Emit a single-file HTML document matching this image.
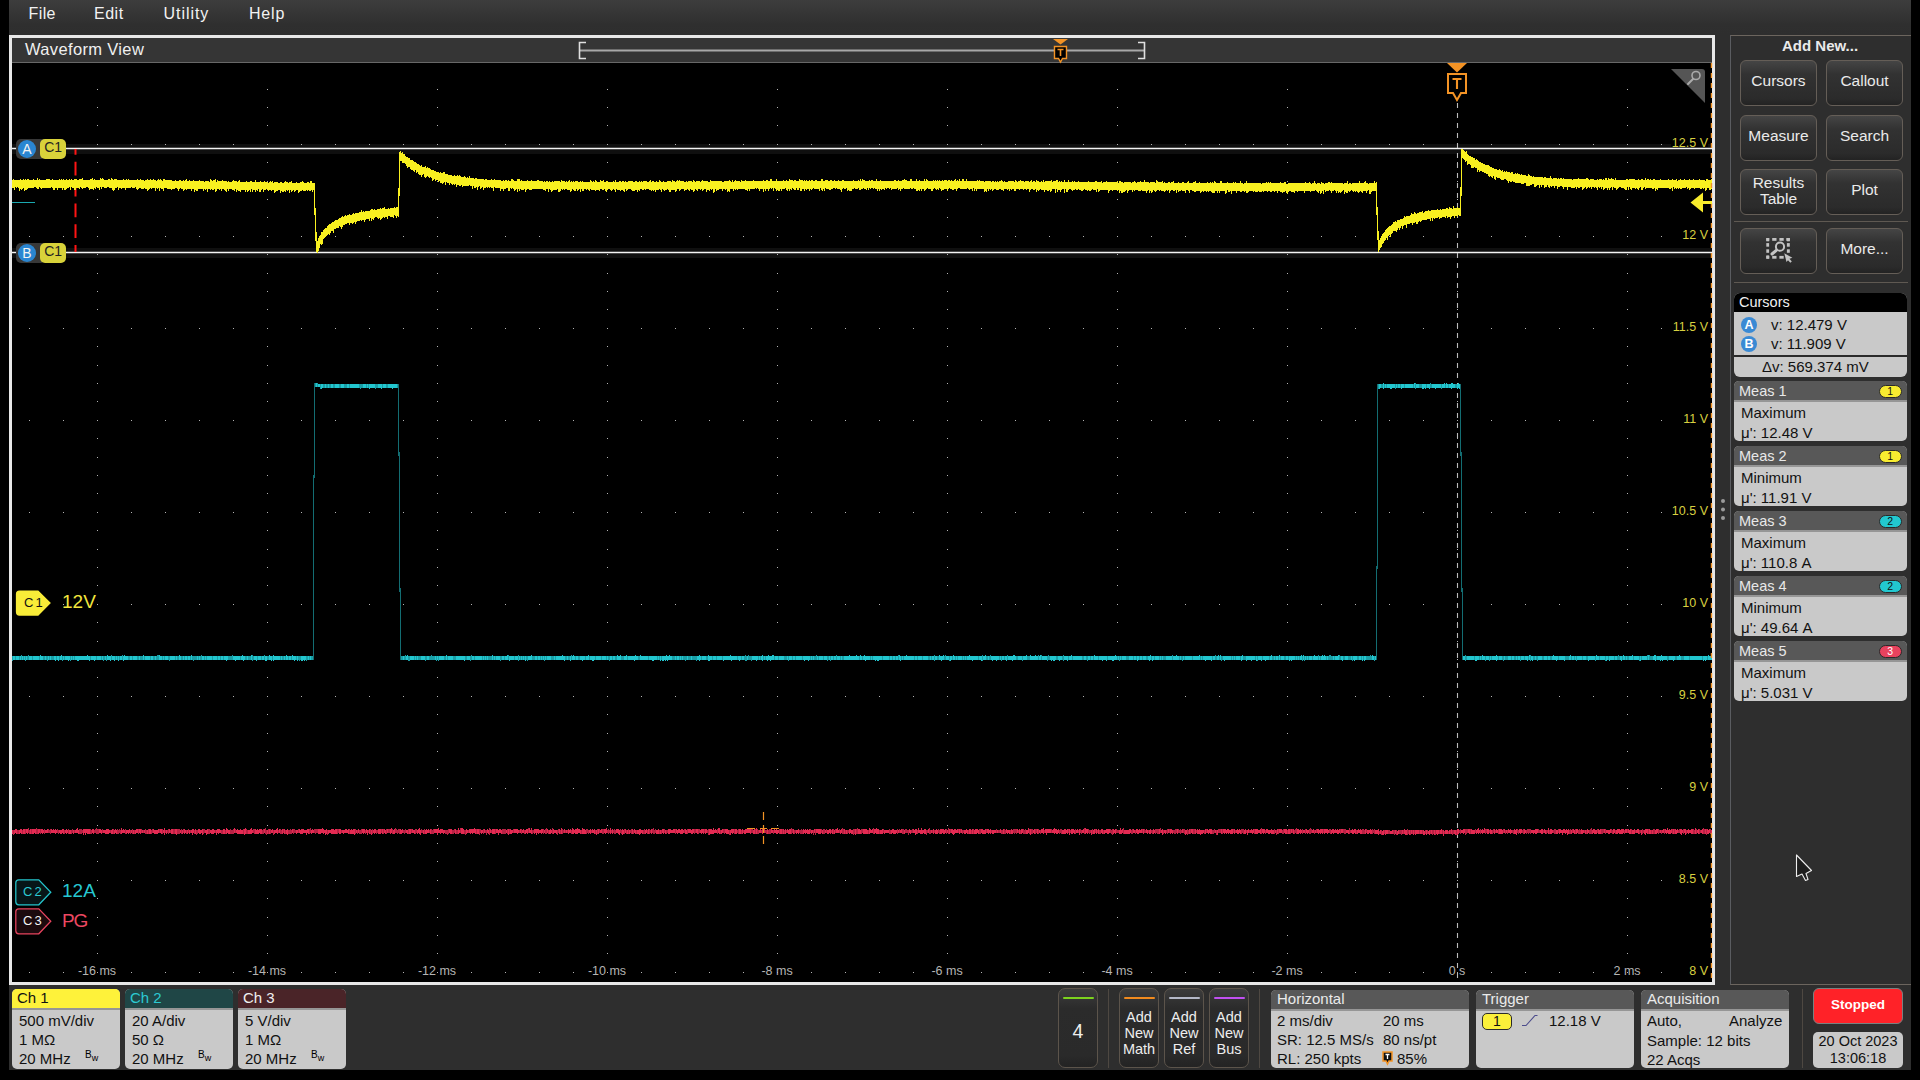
<!DOCTYPE html>
<html><head><meta charset="utf-8">
<style>
*{margin:0;padding:0;box-sizing:border-box}
html,body{width:1920px;height:1080px;overflow:hidden;background:#000}
body{position:relative;font-family:"Liberation Sans",sans-serif;color:#eee}
.a{position:absolute}
.t{position:absolute;white-space:nowrap;line-height:1}
#menu{left:9px;top:0;width:1902px;height:35px;background:linear-gradient(#3d3d3d,#2f2f2f 70%,#2e2e2e)}
#menu .t{font-size:16px;color:#f2f2f2;top:6px}
#frame{left:9px;top:35px;width:1706px;height:950px;border:3px solid #e8e8e8;background:#000}
#title{left:12px;top:38px;width:1700px;height:25px;background:#353535;border-bottom:1px solid #686868}
#rp{left:1715px;top:35px;width:196px;height:950px;background:#2e2e2e}
#rpo{left:1730px;top:35px;width:181px;height:950px;border:1px solid #6c655e;border-left-color:#5a5c60;border-right:none}
.btn{position:absolute;width:77px;height:46px;border:1px solid #655e57;border-radius:6px;background:linear-gradient(#454545,#323232 30%,#2b2b2b 85%,#232323);color:#eaeaea;font-size:15.5px;text-align:center;line-height:1}
.sep{position:absolute;left:1734px;width:174px;height:1px;background:#5f5952}
.card{position:absolute;border-radius:5px;overflow:hidden;background:#c9c9c9}
.card .h{position:absolute;left:0;top:0;right:0;background:#585858;border-bottom:2px solid #969696}
.vl{position:absolute;font-size:12.5px;color:#d8d040;line-height:1;white-space:nowrap;text-align:right;width:60px}
.tl{position:absolute;font-size:12.5px;color:#b4b4b4;line-height:1;white-space:nowrap;text-align:center;width:80px}
#bb{left:9px;top:985px;width:1902px;height:85px;background:#2e2e2e}
.ch .h{height:20px}
.bt{font-size:15px;color:#111;line-height:1}
.nb{position:absolute;width:40px;height:80px;border:1px solid #5c544b;border-radius:7px;background:linear-gradient(#3c3c3c,#2b2b2b 25%,#2a2a2a 85%,#232323);color:#eee;text-align:center}
.nb i{position:absolute;left:3.5px;right:3.5px;top:7.5px;height:2.5px;border-radius:1.5px}
.vsep{position:absolute;top:989px;width:1px;height:79px;background:#4e4842}
</style></head><body>
<div id="menu" class="a">
<span class="t" style="left:19.5px;letter-spacing:0.4px">File</span>
<span class="t" style="left:85px;letter-spacing:0.5px">Edit</span>
<span class="t" style="left:154.5px;letter-spacing:0.95px">Utility</span>
<span class="t" style="left:240px;letter-spacing:0.8px">Help</span>
</div>
<div id="rp" class="a"></div>
<div id="rpo" class="a"></div>
<div id="frame" class="a"></div>
<div id="title" class="a"><span class="t" style="left:13px;top:3px;font-size:16.5px;color:#f0f0f0;letter-spacing:0.35px">Waveform View</span></div>
<svg class="a" style="left:0;top:0" width="1920" height="1080" viewBox="0 0 1920 1080"><path d="M579 50.5H1145" stroke="#a8a8a8" stroke-width="2"/><path d="M586 42.5H579.5V58.5H586" fill="none" stroke="#e0e0e0" stroke-width="1.6"/><path d="M1138 42.5H1144.5V58.5H1138" fill="none" stroke="#e0e0e0" stroke-width="1.6"/><path d="M1053 39H1068L1060.5 44.5Z" fill="#f39325"/><path d="M1054.5 46.5H1066.5V58.5H1062.5L1060.5 62L1058.5 58.5H1054.5Z" fill="#000" stroke="#f39325" stroke-width="1.4"/><path d="M1057.5 49.5H1063.5M1060.5 49.5V56" stroke="#f39325" stroke-width="1.6"/><rect x="12" y="144" width="1700" height="10" fill="#0f0f0f"/><rect x="12" y="248" width="1700" height="10" fill="#0f0f0f"/><path fill="#b4b4b4" d="M29 144h1v1h-1zM63 144h1v1h-1zM97 144h1v1h-1zM131 144h1v1h-1zM165 144h1v1h-1zM199 144h1v1h-1zM233 144h1v1h-1zM267 144h1v1h-1zM301 144h1v1h-1zM335 144h1v1h-1zM369 144h1v1h-1zM403 144h1v1h-1zM437 144h1v1h-1zM471 144h1v1h-1zM505 144h1v1h-1zM539 144h1v1h-1zM573 144h1v1h-1zM607 144h1v1h-1zM641 144h1v1h-1zM675 144h1v1h-1zM709 144h1v1h-1zM743 144h1v1h-1zM777 144h1v1h-1zM811 144h1v1h-1zM845 144h1v1h-1zM879 144h1v1h-1zM913 144h1v1h-1zM947 144h1v1h-1zM981 144h1v1h-1zM1015 144h1v1h-1zM1049 144h1v1h-1zM1083 144h1v1h-1zM1117 144h1v1h-1zM1151 144h1v1h-1zM1185 144h1v1h-1zM1219 144h1v1h-1zM1253 144h1v1h-1zM1287 144h1v1h-1zM1321 144h1v1h-1zM1355 144h1v1h-1zM1389 144h1v1h-1zM1423 144h1v1h-1zM1457 144h1v1h-1zM1491 144h1v1h-1zM1525 144h1v1h-1zM1559 144h1v1h-1zM1593 144h1v1h-1zM1627 144h1v1h-1zM1661 144h1v1h-1zM1695 144h1v1h-1zM29 236h1v1h-1zM63 236h1v1h-1zM97 236h1v1h-1zM131 236h1v1h-1zM165 236h1v1h-1zM199 236h1v1h-1zM233 236h1v1h-1zM267 236h1v1h-1zM301 236h1v1h-1zM335 236h1v1h-1zM369 236h1v1h-1zM403 236h1v1h-1zM437 236h1v1h-1zM471 236h1v1h-1zM505 236h1v1h-1zM539 236h1v1h-1zM573 236h1v1h-1zM607 236h1v1h-1zM641 236h1v1h-1zM675 236h1v1h-1zM709 236h1v1h-1zM743 236h1v1h-1zM777 236h1v1h-1zM811 236h1v1h-1zM845 236h1v1h-1zM879 236h1v1h-1zM913 236h1v1h-1zM947 236h1v1h-1zM981 236h1v1h-1zM1015 236h1v1h-1zM1049 236h1v1h-1zM1083 236h1v1h-1zM1117 236h1v1h-1zM1151 236h1v1h-1zM1185 236h1v1h-1zM1219 236h1v1h-1zM1253 236h1v1h-1zM1287 236h1v1h-1zM1321 236h1v1h-1zM1355 236h1v1h-1zM1389 236h1v1h-1zM1423 236h1v1h-1zM1457 236h1v1h-1zM1491 236h1v1h-1zM1525 236h1v1h-1zM1559 236h1v1h-1zM1593 236h1v1h-1zM1627 236h1v1h-1zM1661 236h1v1h-1zM1695 236h1v1h-1zM29 328h1v1h-1zM63 328h1v1h-1zM97 328h1v1h-1zM131 328h1v1h-1zM165 328h1v1h-1zM199 328h1v1h-1zM233 328h1v1h-1zM267 328h1v1h-1zM301 328h1v1h-1zM335 328h1v1h-1zM369 328h1v1h-1zM403 328h1v1h-1zM437 328h1v1h-1zM471 328h1v1h-1zM505 328h1v1h-1zM539 328h1v1h-1zM573 328h1v1h-1zM607 328h1v1h-1zM641 328h1v1h-1zM675 328h1v1h-1zM709 328h1v1h-1zM743 328h1v1h-1zM777 328h1v1h-1zM811 328h1v1h-1zM845 328h1v1h-1zM879 328h1v1h-1zM913 328h1v1h-1zM947 328h1v1h-1zM981 328h1v1h-1zM1015 328h1v1h-1zM1049 328h1v1h-1zM1083 328h1v1h-1zM1117 328h1v1h-1zM1151 328h1v1h-1zM1185 328h1v1h-1zM1219 328h1v1h-1zM1253 328h1v1h-1zM1287 328h1v1h-1zM1321 328h1v1h-1zM1355 328h1v1h-1zM1389 328h1v1h-1zM1423 328h1v1h-1zM1457 328h1v1h-1zM1491 328h1v1h-1zM1525 328h1v1h-1zM1559 328h1v1h-1zM1593 328h1v1h-1zM1627 328h1v1h-1zM1661 328h1v1h-1zM1695 328h1v1h-1zM29 420h1v1h-1zM63 420h1v1h-1zM97 420h1v1h-1zM131 420h1v1h-1zM165 420h1v1h-1zM199 420h1v1h-1zM233 420h1v1h-1zM267 420h1v1h-1zM301 420h1v1h-1zM335 420h1v1h-1zM369 420h1v1h-1zM403 420h1v1h-1zM437 420h1v1h-1zM471 420h1v1h-1zM505 420h1v1h-1zM539 420h1v1h-1zM573 420h1v1h-1zM607 420h1v1h-1zM641 420h1v1h-1zM675 420h1v1h-1zM709 420h1v1h-1zM743 420h1v1h-1zM777 420h1v1h-1zM811 420h1v1h-1zM845 420h1v1h-1zM879 420h1v1h-1zM913 420h1v1h-1zM947 420h1v1h-1zM981 420h1v1h-1zM1015 420h1v1h-1zM1049 420h1v1h-1zM1083 420h1v1h-1zM1117 420h1v1h-1zM1151 420h1v1h-1zM1185 420h1v1h-1zM1219 420h1v1h-1zM1253 420h1v1h-1zM1287 420h1v1h-1zM1321 420h1v1h-1zM1355 420h1v1h-1zM1389 420h1v1h-1zM1423 420h1v1h-1zM1457 420h1v1h-1zM1491 420h1v1h-1zM1525 420h1v1h-1zM1559 420h1v1h-1zM1593 420h1v1h-1zM1627 420h1v1h-1zM1661 420h1v1h-1zM1695 420h1v1h-1zM29 512h1v1h-1zM63 512h1v1h-1zM97 512h1v1h-1zM131 512h1v1h-1zM165 512h1v1h-1zM199 512h1v1h-1zM233 512h1v1h-1zM267 512h1v1h-1zM301 512h1v1h-1zM335 512h1v1h-1zM369 512h1v1h-1zM403 512h1v1h-1zM437 512h1v1h-1zM471 512h1v1h-1zM505 512h1v1h-1zM539 512h1v1h-1zM573 512h1v1h-1zM607 512h1v1h-1zM641 512h1v1h-1zM675 512h1v1h-1zM709 512h1v1h-1zM743 512h1v1h-1zM777 512h1v1h-1zM811 512h1v1h-1zM845 512h1v1h-1zM879 512h1v1h-1zM913 512h1v1h-1zM947 512h1v1h-1zM981 512h1v1h-1zM1015 512h1v1h-1zM1049 512h1v1h-1zM1083 512h1v1h-1zM1117 512h1v1h-1zM1151 512h1v1h-1zM1185 512h1v1h-1zM1219 512h1v1h-1zM1253 512h1v1h-1zM1287 512h1v1h-1zM1321 512h1v1h-1zM1355 512h1v1h-1zM1389 512h1v1h-1zM1423 512h1v1h-1zM1457 512h1v1h-1zM1491 512h1v1h-1zM1525 512h1v1h-1zM1559 512h1v1h-1zM1593 512h1v1h-1zM1627 512h1v1h-1zM1661 512h1v1h-1zM1695 512h1v1h-1zM29 604h1v1h-1zM63 604h1v1h-1zM97 604h1v1h-1zM131 604h1v1h-1zM165 604h1v1h-1zM199 604h1v1h-1zM233 604h1v1h-1zM267 604h1v1h-1zM301 604h1v1h-1zM335 604h1v1h-1zM369 604h1v1h-1zM403 604h1v1h-1zM437 604h1v1h-1zM471 604h1v1h-1zM505 604h1v1h-1zM539 604h1v1h-1zM573 604h1v1h-1zM607 604h1v1h-1zM641 604h1v1h-1zM675 604h1v1h-1zM709 604h1v1h-1zM743 604h1v1h-1zM777 604h1v1h-1zM811 604h1v1h-1zM845 604h1v1h-1zM879 604h1v1h-1zM913 604h1v1h-1zM947 604h1v1h-1zM981 604h1v1h-1zM1015 604h1v1h-1zM1049 604h1v1h-1zM1083 604h1v1h-1zM1117 604h1v1h-1zM1151 604h1v1h-1zM1185 604h1v1h-1zM1219 604h1v1h-1zM1253 604h1v1h-1zM1287 604h1v1h-1zM1321 604h1v1h-1zM1355 604h1v1h-1zM1389 604h1v1h-1zM1423 604h1v1h-1zM1457 604h1v1h-1zM1491 604h1v1h-1zM1525 604h1v1h-1zM1559 604h1v1h-1zM1593 604h1v1h-1zM1627 604h1v1h-1zM1661 604h1v1h-1zM1695 604h1v1h-1zM29 696h1v1h-1zM63 696h1v1h-1zM97 696h1v1h-1zM131 696h1v1h-1zM165 696h1v1h-1zM199 696h1v1h-1zM233 696h1v1h-1zM267 696h1v1h-1zM301 696h1v1h-1zM335 696h1v1h-1zM369 696h1v1h-1zM403 696h1v1h-1zM437 696h1v1h-1zM471 696h1v1h-1zM505 696h1v1h-1zM539 696h1v1h-1zM573 696h1v1h-1zM607 696h1v1h-1zM641 696h1v1h-1zM675 696h1v1h-1zM709 696h1v1h-1zM743 696h1v1h-1zM777 696h1v1h-1zM811 696h1v1h-1zM845 696h1v1h-1zM879 696h1v1h-1zM913 696h1v1h-1zM947 696h1v1h-1zM981 696h1v1h-1zM1015 696h1v1h-1zM1049 696h1v1h-1zM1083 696h1v1h-1zM1117 696h1v1h-1zM1151 696h1v1h-1zM1185 696h1v1h-1zM1219 696h1v1h-1zM1253 696h1v1h-1zM1287 696h1v1h-1zM1321 696h1v1h-1zM1355 696h1v1h-1zM1389 696h1v1h-1zM1423 696h1v1h-1zM1457 696h1v1h-1zM1491 696h1v1h-1zM1525 696h1v1h-1zM1559 696h1v1h-1zM1593 696h1v1h-1zM1627 696h1v1h-1zM1661 696h1v1h-1zM1695 696h1v1h-1zM29 788h1v1h-1zM63 788h1v1h-1zM97 788h1v1h-1zM131 788h1v1h-1zM165 788h1v1h-1zM199 788h1v1h-1zM233 788h1v1h-1zM267 788h1v1h-1zM301 788h1v1h-1zM335 788h1v1h-1zM369 788h1v1h-1zM403 788h1v1h-1zM437 788h1v1h-1zM471 788h1v1h-1zM505 788h1v1h-1zM539 788h1v1h-1zM573 788h1v1h-1zM607 788h1v1h-1zM641 788h1v1h-1zM675 788h1v1h-1zM709 788h1v1h-1zM743 788h1v1h-1zM777 788h1v1h-1zM811 788h1v1h-1zM845 788h1v1h-1zM879 788h1v1h-1zM913 788h1v1h-1zM947 788h1v1h-1zM981 788h1v1h-1zM1015 788h1v1h-1zM1049 788h1v1h-1zM1083 788h1v1h-1zM1117 788h1v1h-1zM1151 788h1v1h-1zM1185 788h1v1h-1zM1219 788h1v1h-1zM1253 788h1v1h-1zM1287 788h1v1h-1zM1321 788h1v1h-1zM1355 788h1v1h-1zM1389 788h1v1h-1zM1423 788h1v1h-1zM1457 788h1v1h-1zM1491 788h1v1h-1zM1525 788h1v1h-1zM1559 788h1v1h-1zM1593 788h1v1h-1zM1627 788h1v1h-1zM1661 788h1v1h-1zM1695 788h1v1h-1zM29 880h1v1h-1zM63 880h1v1h-1zM97 880h1v1h-1zM131 880h1v1h-1zM165 880h1v1h-1zM199 880h1v1h-1zM233 880h1v1h-1zM267 880h1v1h-1zM301 880h1v1h-1zM335 880h1v1h-1zM369 880h1v1h-1zM403 880h1v1h-1zM437 880h1v1h-1zM471 880h1v1h-1zM505 880h1v1h-1zM539 880h1v1h-1zM573 880h1v1h-1zM607 880h1v1h-1zM641 880h1v1h-1zM675 880h1v1h-1zM709 880h1v1h-1zM743 880h1v1h-1zM777 880h1v1h-1zM811 880h1v1h-1zM845 880h1v1h-1zM879 880h1v1h-1zM913 880h1v1h-1zM947 880h1v1h-1zM981 880h1v1h-1zM1015 880h1v1h-1zM1049 880h1v1h-1zM1083 880h1v1h-1zM1117 880h1v1h-1zM1151 880h1v1h-1zM1185 880h1v1h-1zM1219 880h1v1h-1zM1253 880h1v1h-1zM1287 880h1v1h-1zM1321 880h1v1h-1zM1355 880h1v1h-1zM1389 880h1v1h-1zM1423 880h1v1h-1zM1457 880h1v1h-1zM1491 880h1v1h-1zM1525 880h1v1h-1zM1559 880h1v1h-1zM1593 880h1v1h-1zM1627 880h1v1h-1zM1661 880h1v1h-1zM1695 880h1v1h-1zM29 972h1v1h-1zM63 972h1v1h-1zM97 972h1v1h-1zM131 972h1v1h-1zM165 972h1v1h-1zM199 972h1v1h-1zM233 972h1v1h-1zM267 972h1v1h-1zM301 972h1v1h-1zM335 972h1v1h-1zM369 972h1v1h-1zM403 972h1v1h-1zM437 972h1v1h-1zM471 972h1v1h-1zM505 972h1v1h-1zM539 972h1v1h-1zM573 972h1v1h-1zM607 972h1v1h-1zM641 972h1v1h-1zM675 972h1v1h-1zM709 972h1v1h-1zM743 972h1v1h-1zM777 972h1v1h-1zM811 972h1v1h-1zM845 972h1v1h-1zM879 972h1v1h-1zM913 972h1v1h-1zM947 972h1v1h-1zM981 972h1v1h-1zM1015 972h1v1h-1zM1049 972h1v1h-1zM1083 972h1v1h-1zM1117 972h1v1h-1zM1151 972h1v1h-1zM1185 972h1v1h-1zM1219 972h1v1h-1zM1253 972h1v1h-1zM1287 972h1v1h-1zM1321 972h1v1h-1zM1355 972h1v1h-1zM1389 972h1v1h-1zM1423 972h1v1h-1zM1457 972h1v1h-1zM1491 972h1v1h-1zM1525 972h1v1h-1zM1559 972h1v1h-1zM1593 972h1v1h-1zM1627 972h1v1h-1zM1661 972h1v1h-1zM1695 972h1v1h-1zM97 89h1v1h-1zM97 107h1v1h-1zM97 125h1v1h-1zM97 162h1v1h-1zM97 181h1v1h-1zM97 199h1v1h-1zM97 217h1v1h-1zM97 254h1v1h-1zM97 273h1v1h-1zM97 291h1v1h-1zM97 309h1v1h-1zM97 346h1v1h-1zM97 365h1v1h-1zM97 383h1v1h-1zM97 401h1v1h-1zM97 438h1v1h-1zM97 457h1v1h-1zM97 475h1v1h-1zM97 493h1v1h-1zM97 530h1v1h-1zM97 549h1v1h-1zM97 567h1v1h-1zM97 585h1v1h-1zM97 622h1v1h-1zM97 641h1v1h-1zM97 659h1v1h-1zM97 677h1v1h-1zM97 714h1v1h-1zM97 733h1v1h-1zM97 751h1v1h-1zM97 769h1v1h-1zM97 806h1v1h-1zM97 825h1v1h-1zM97 843h1v1h-1zM97 861h1v1h-1zM97 898h1v1h-1zM97 917h1v1h-1zM97 935h1v1h-1zM97 953h1v1h-1zM267 89h1v1h-1zM267 107h1v1h-1zM267 125h1v1h-1zM267 162h1v1h-1zM267 181h1v1h-1zM267 199h1v1h-1zM267 217h1v1h-1zM267 254h1v1h-1zM267 273h1v1h-1zM267 291h1v1h-1zM267 309h1v1h-1zM267 346h1v1h-1zM267 365h1v1h-1zM267 383h1v1h-1zM267 401h1v1h-1zM267 438h1v1h-1zM267 457h1v1h-1zM267 475h1v1h-1zM267 493h1v1h-1zM267 530h1v1h-1zM267 549h1v1h-1zM267 567h1v1h-1zM267 585h1v1h-1zM267 622h1v1h-1zM267 641h1v1h-1zM267 659h1v1h-1zM267 677h1v1h-1zM267 714h1v1h-1zM267 733h1v1h-1zM267 751h1v1h-1zM267 769h1v1h-1zM267 806h1v1h-1zM267 825h1v1h-1zM267 843h1v1h-1zM267 861h1v1h-1zM267 898h1v1h-1zM267 917h1v1h-1zM267 935h1v1h-1zM267 953h1v1h-1zM437 89h1v1h-1zM437 107h1v1h-1zM437 125h1v1h-1zM437 162h1v1h-1zM437 181h1v1h-1zM437 199h1v1h-1zM437 217h1v1h-1zM437 254h1v1h-1zM437 273h1v1h-1zM437 291h1v1h-1zM437 309h1v1h-1zM437 346h1v1h-1zM437 365h1v1h-1zM437 383h1v1h-1zM437 401h1v1h-1zM437 438h1v1h-1zM437 457h1v1h-1zM437 475h1v1h-1zM437 493h1v1h-1zM437 530h1v1h-1zM437 549h1v1h-1zM437 567h1v1h-1zM437 585h1v1h-1zM437 622h1v1h-1zM437 641h1v1h-1zM437 659h1v1h-1zM437 677h1v1h-1zM437 714h1v1h-1zM437 733h1v1h-1zM437 751h1v1h-1zM437 769h1v1h-1zM437 806h1v1h-1zM437 825h1v1h-1zM437 843h1v1h-1zM437 861h1v1h-1zM437 898h1v1h-1zM437 917h1v1h-1zM437 935h1v1h-1zM437 953h1v1h-1zM607 89h1v1h-1zM607 107h1v1h-1zM607 125h1v1h-1zM607 162h1v1h-1zM607 181h1v1h-1zM607 199h1v1h-1zM607 217h1v1h-1zM607 254h1v1h-1zM607 273h1v1h-1zM607 291h1v1h-1zM607 309h1v1h-1zM607 346h1v1h-1zM607 365h1v1h-1zM607 383h1v1h-1zM607 401h1v1h-1zM607 438h1v1h-1zM607 457h1v1h-1zM607 475h1v1h-1zM607 493h1v1h-1zM607 530h1v1h-1zM607 549h1v1h-1zM607 567h1v1h-1zM607 585h1v1h-1zM607 622h1v1h-1zM607 641h1v1h-1zM607 659h1v1h-1zM607 677h1v1h-1zM607 714h1v1h-1zM607 733h1v1h-1zM607 751h1v1h-1zM607 769h1v1h-1zM607 806h1v1h-1zM607 825h1v1h-1zM607 843h1v1h-1zM607 861h1v1h-1zM607 898h1v1h-1zM607 917h1v1h-1zM607 935h1v1h-1zM607 953h1v1h-1zM777 89h1v1h-1zM777 107h1v1h-1zM777 125h1v1h-1zM777 162h1v1h-1zM777 181h1v1h-1zM777 199h1v1h-1zM777 217h1v1h-1zM777 254h1v1h-1zM777 273h1v1h-1zM777 291h1v1h-1zM777 309h1v1h-1zM777 346h1v1h-1zM777 365h1v1h-1zM777 383h1v1h-1zM777 401h1v1h-1zM777 438h1v1h-1zM777 457h1v1h-1zM777 475h1v1h-1zM777 493h1v1h-1zM777 530h1v1h-1zM777 549h1v1h-1zM777 567h1v1h-1zM777 585h1v1h-1zM777 622h1v1h-1zM777 641h1v1h-1zM777 659h1v1h-1zM777 677h1v1h-1zM777 714h1v1h-1zM777 733h1v1h-1zM777 751h1v1h-1zM777 769h1v1h-1zM777 806h1v1h-1zM777 825h1v1h-1zM777 843h1v1h-1zM777 861h1v1h-1zM777 898h1v1h-1zM777 917h1v1h-1zM777 935h1v1h-1zM777 953h1v1h-1zM947 89h1v1h-1zM947 107h1v1h-1zM947 125h1v1h-1zM947 162h1v1h-1zM947 181h1v1h-1zM947 199h1v1h-1zM947 217h1v1h-1zM947 254h1v1h-1zM947 273h1v1h-1zM947 291h1v1h-1zM947 309h1v1h-1zM947 346h1v1h-1zM947 365h1v1h-1zM947 383h1v1h-1zM947 401h1v1h-1zM947 438h1v1h-1zM947 457h1v1h-1zM947 475h1v1h-1zM947 493h1v1h-1zM947 530h1v1h-1zM947 549h1v1h-1zM947 567h1v1h-1zM947 585h1v1h-1zM947 622h1v1h-1zM947 641h1v1h-1zM947 659h1v1h-1zM947 677h1v1h-1zM947 714h1v1h-1zM947 733h1v1h-1zM947 751h1v1h-1zM947 769h1v1h-1zM947 806h1v1h-1zM947 825h1v1h-1zM947 843h1v1h-1zM947 861h1v1h-1zM947 898h1v1h-1zM947 917h1v1h-1zM947 935h1v1h-1zM947 953h1v1h-1zM1117 89h1v1h-1zM1117 107h1v1h-1zM1117 125h1v1h-1zM1117 162h1v1h-1zM1117 181h1v1h-1zM1117 199h1v1h-1zM1117 217h1v1h-1zM1117 254h1v1h-1zM1117 273h1v1h-1zM1117 291h1v1h-1zM1117 309h1v1h-1zM1117 346h1v1h-1zM1117 365h1v1h-1zM1117 383h1v1h-1zM1117 401h1v1h-1zM1117 438h1v1h-1zM1117 457h1v1h-1zM1117 475h1v1h-1zM1117 493h1v1h-1zM1117 530h1v1h-1zM1117 549h1v1h-1zM1117 567h1v1h-1zM1117 585h1v1h-1zM1117 622h1v1h-1zM1117 641h1v1h-1zM1117 659h1v1h-1zM1117 677h1v1h-1zM1117 714h1v1h-1zM1117 733h1v1h-1zM1117 751h1v1h-1zM1117 769h1v1h-1zM1117 806h1v1h-1zM1117 825h1v1h-1zM1117 843h1v1h-1zM1117 861h1v1h-1zM1117 898h1v1h-1zM1117 917h1v1h-1zM1117 935h1v1h-1zM1117 953h1v1h-1zM1287 89h1v1h-1zM1287 107h1v1h-1zM1287 125h1v1h-1zM1287 162h1v1h-1zM1287 181h1v1h-1zM1287 199h1v1h-1zM1287 217h1v1h-1zM1287 254h1v1h-1zM1287 273h1v1h-1zM1287 291h1v1h-1zM1287 309h1v1h-1zM1287 346h1v1h-1zM1287 365h1v1h-1zM1287 383h1v1h-1zM1287 401h1v1h-1zM1287 438h1v1h-1zM1287 457h1v1h-1zM1287 475h1v1h-1zM1287 493h1v1h-1zM1287 530h1v1h-1zM1287 549h1v1h-1zM1287 567h1v1h-1zM1287 585h1v1h-1zM1287 622h1v1h-1zM1287 641h1v1h-1zM1287 659h1v1h-1zM1287 677h1v1h-1zM1287 714h1v1h-1zM1287 733h1v1h-1zM1287 751h1v1h-1zM1287 769h1v1h-1zM1287 806h1v1h-1zM1287 825h1v1h-1zM1287 843h1v1h-1zM1287 861h1v1h-1zM1287 898h1v1h-1zM1287 917h1v1h-1zM1287 935h1v1h-1zM1287 953h1v1h-1zM1457 89h1v1h-1zM1457 107h1v1h-1zM1457 125h1v1h-1zM1457 162h1v1h-1zM1457 181h1v1h-1zM1457 199h1v1h-1zM1457 217h1v1h-1zM1457 254h1v1h-1zM1457 273h1v1h-1zM1457 291h1v1h-1zM1457 309h1v1h-1zM1457 346h1v1h-1zM1457 365h1v1h-1zM1457 383h1v1h-1zM1457 401h1v1h-1zM1457 438h1v1h-1zM1457 457h1v1h-1zM1457 475h1v1h-1zM1457 493h1v1h-1zM1457 530h1v1h-1zM1457 549h1v1h-1zM1457 567h1v1h-1zM1457 585h1v1h-1zM1457 622h1v1h-1zM1457 641h1v1h-1zM1457 659h1v1h-1zM1457 677h1v1h-1zM1457 714h1v1h-1zM1457 733h1v1h-1zM1457 751h1v1h-1zM1457 769h1v1h-1zM1457 806h1v1h-1zM1457 825h1v1h-1zM1457 843h1v1h-1zM1457 861h1v1h-1zM1457 898h1v1h-1zM1457 917h1v1h-1zM1457 935h1v1h-1zM1457 953h1v1h-1zM1627 89h1v1h-1zM1627 107h1v1h-1zM1627 125h1v1h-1zM1627 162h1v1h-1zM1627 181h1v1h-1zM1627 199h1v1h-1zM1627 217h1v1h-1zM1627 254h1v1h-1zM1627 273h1v1h-1zM1627 291h1v1h-1zM1627 309h1v1h-1zM1627 346h1v1h-1zM1627 365h1v1h-1zM1627 383h1v1h-1zM1627 401h1v1h-1zM1627 438h1v1h-1zM1627 457h1v1h-1zM1627 475h1v1h-1zM1627 493h1v1h-1zM1627 530h1v1h-1zM1627 549h1v1h-1zM1627 567h1v1h-1zM1627 585h1v1h-1zM1627 622h1v1h-1zM1627 641h1v1h-1zM1627 659h1v1h-1zM1627 677h1v1h-1zM1627 714h1v1h-1zM1627 733h1v1h-1zM1627 751h1v1h-1zM1627 769h1v1h-1zM1627 806h1v1h-1zM1627 825h1v1h-1zM1627 843h1v1h-1zM1627 861h1v1h-1zM1627 898h1v1h-1zM1627 917h1v1h-1zM1627 935h1v1h-1zM1627 953h1v1h-1z"/><path d="M12 148.5H1712M12 252.5H1712" stroke="#f4f4f4" stroke-width="1.3"/><path d="M75.5 149V252" stroke="#ff1414" stroke-width="2" stroke-dasharray="13.8 7" stroke-dashoffset="8"/><path d="M12 202.5H35" stroke="#1aa8b0" stroke-width="1"/><path d="M1457.5 103V978" stroke="#bdbdbd" stroke-width="1.1" stroke-dasharray="5 5"/><g stroke-width="1" shape-rendering="crispEdges"><path stroke="#f8f020" d="M12.5 180V188M13.5 179V188M14.5 180V190M15.5 180V187M16.5 180V188M17.5 180V187M18.5 180V188M19.5 180V191M20.5 179V189M21.5 180V190M22.5 180V189M23.5 179V188M24.5 180V191M25.5 179V190M26.5 180V190M27.5 179V189M28.5 179V188M29.5 180V188M30.5 180V188M31.5 180V188M32.5 180V188M33.5 179V188M34.5 180V187M35.5 180V187M36.5 180V188M37.5 178V189M38.5 180V189M39.5 179V187M40.5 180V188M41.5 180V189M42.5 180V188M43.5 180V188M44.5 180V188M45.5 180V188M46.5 179V188M47.5 179V188M48.5 179V188M49.5 179V188M50.5 180V188M51.5 180V187M52.5 179V188M53.5 180V190M54.5 180V190M55.5 180V188M56.5 180V188M57.5 180V190M58.5 180V188M59.5 179V188M60.5 180V188M61.5 179V188M62.5 180V190M63.5 179V188M64.5 180V190M65.5 180V190M66.5 179V189M67.5 180V188M68.5 180V188M69.5 179V187M70.5 180V190M71.5 179V187M72.5 180V188M73.5 180V188M74.5 179V190M75.5 179V190M76.5 179V188M77.5 180V188M78.5 180V188M79.5 179V189M80.5 179V187M81.5 179V188M82.5 178V189M83.5 180V188M84.5 180V188M85.5 180V188M86.5 180V187M87.5 180V187M88.5 180V188M89.5 180V190M90.5 179V189M91.5 179V189M92.5 178V189M93.5 180V190M94.5 179V188M95.5 180V189M96.5 180V187M97.5 180V188M98.5 180V188M99.5 180V190M100.5 178V187M101.5 179V189M102.5 178V187M103.5 179V187M104.5 180V188M105.5 180V188M106.5 180V188M107.5 180V187M108.5 179V187M109.5 179V188M110.5 180V188M111.5 178V188M112.5 179V190M113.5 180V191M114.5 179V190M115.5 179V188M116.5 179V188M117.5 180V187M118.5 180V190M119.5 180V188M120.5 180V188M121.5 180V189M122.5 180V188M123.5 179V188M124.5 180V188M125.5 180V190M126.5 179V188M127.5 180V188M128.5 179V188M129.5 180V188M130.5 180V188M131.5 180V187M132.5 180V188M133.5 180V188M134.5 180V188M135.5 180V187M136.5 180V189M137.5 179V190M138.5 180V189M139.5 180V188M140.5 179V188M141.5 180V189M142.5 180V189M143.5 180V189M144.5 181V188M145.5 180V189M146.5 180V189M147.5 179V191M148.5 180V190M149.5 180V189M150.5 179V188M151.5 180V189M152.5 180V188M153.5 179V188M154.5 180V188M155.5 180V191M156.5 181V188M157.5 180V189M158.5 179V188M159.5 180V191M160.5 179V188M161.5 180V189M162.5 181V189M163.5 179V191M164.5 179V188M165.5 180V188M166.5 180V188M167.5 180V189M168.5 180V189M169.5 180V189M170.5 180V189M171.5 180V190M172.5 181V189M173.5 181V189M174.5 181V189M175.5 180V188M176.5 181V188M177.5 181V189M178.5 181V191M179.5 180V189M180.5 180V188M181.5 181V189M182.5 181V189M183.5 180V191M184.5 181V190M185.5 180V189M186.5 179V190M187.5 181V189M188.5 181V189M189.5 180V189M190.5 181V189M191.5 181V191M192.5 181V189M193.5 180V189M194.5 181V192M195.5 181V190M196.5 181V191M197.5 181V191M198.5 181V189M199.5 180V189M200.5 181V189M201.5 181V189M202.5 181V189M203.5 181V191M204.5 182V189M205.5 181V190M206.5 181V189M207.5 181V192M208.5 181V189M209.5 182V189M210.5 179V190M211.5 180V189M212.5 181V190M213.5 180V190M214.5 180V189M215.5 179V192M216.5 182V191M217.5 180V189M218.5 181V189M219.5 181V190M220.5 181V189M221.5 181V191M222.5 180V189M223.5 181V189M224.5 181V190M225.5 181V191M226.5 181V192M227.5 182V189M228.5 181V191M229.5 182V189M230.5 182V189M231.5 182V189M232.5 181V190M233.5 180V190M234.5 181V191M235.5 181V189M236.5 181V192M237.5 182V190M238.5 181V191M239.5 180V191M240.5 182V192M241.5 182V190M242.5 182V190M243.5 182V190M244.5 182V190M245.5 182V192M246.5 181V190M247.5 182V192M248.5 182V191M249.5 182V190M250.5 181V192M251.5 181V189M252.5 182V192M253.5 182V190M254.5 182V190M255.5 180V192M256.5 182V190M257.5 182V191M258.5 182V189M259.5 182V192M260.5 181V192M261.5 182V190M262.5 182V189M263.5 182V192M264.5 181V190M265.5 182V190M266.5 182V189M267.5 182V190M268.5 183V191M269.5 182V190M270.5 181V190M271.5 182V191M272.5 181V190M273.5 183V190M274.5 182V193M275.5 182V192M276.5 182V191M277.5 182V191M278.5 183V190M279.5 183V190M280.5 182V193M281.5 182V191M282.5 183V192M283.5 183V192M284.5 182V191M285.5 181V192M286.5 182V190M287.5 182V191M288.5 183V190M289.5 182V193M290.5 182V190M291.5 181V192M292.5 183V191M293.5 183V190M294.5 183V192M295.5 183V191M296.5 182V190M297.5 183V190M298.5 183V193M299.5 183V192M300.5 182V191M301.5 182V191M302.5 181V190M303.5 182V191M304.5 183V191M305.5 183V191M306.5 183V190M307.5 182V191M308.5 182V190M309.5 183V191M310.5 181V191M311.5 181V190M312.5 183V192M313.5 183V190M314.5 183V215M315.5 208V241M316.5 232V252M317.5 241V253M318.5 238V251M319.5 236V248M320.5 235V244M321.5 232V245M322.5 232V244M323.5 230V239M324.5 229V238M325.5 228V237M326.5 228V236M327.5 226V235M328.5 225V234M329.5 224V235M330.5 224V233M331.5 223V231M332.5 222V231M333.5 222V233M334.5 221V229M335.5 220V229M336.5 220V228M337.5 220V228M338.5 219V228M339.5 218V226M340.5 218V227M341.5 217V229M342.5 216V227M343.5 217V225M344.5 216V225M345.5 215V224M346.5 216V224M347.5 215V223M348.5 215V223M349.5 214V225M350.5 215V223M351.5 215V223M352.5 214V224M353.5 213V223M354.5 214V222M355.5 213V224M356.5 213V222M357.5 213V221M358.5 213V221M359.5 212V221M360.5 212V220M361.5 210V221M362.5 212V220M363.5 211V220M364.5 212V222M365.5 211V220M366.5 211V219M367.5 211V219M368.5 211V219M369.5 211V221M370.5 210V218M371.5 209V221M372.5 209V219M373.5 210V220M374.5 209V218M375.5 210V217M376.5 210V217M377.5 209V218M378.5 209V219M379.5 209V218M380.5 208V220M381.5 209V219M382.5 208V218M383.5 208V217M384.5 207V218M385.5 209V217M386.5 209V217M387.5 209V219M388.5 208V216M389.5 209V216M390.5 208V217M391.5 208V217M392.5 208V217M393.5 208V218M394.5 207V215M395.5 208V216M396.5 207V218M397.5 207V216M398.5 188V217M399.5 152V196M400.5 151V161M401.5 153V161M402.5 152V163M403.5 154V163M404.5 154V163M405.5 156V164M406.5 157V166M407.5 157V168M408.5 158V167M409.5 158V167M410.5 160V169M411.5 160V170M412.5 160V170M413.5 161V171M414.5 162V172M415.5 162V170M416.5 163V173M417.5 164V172M418.5 164V174M419.5 165V175M420.5 166V175M421.5 165V177M422.5 167V175M423.5 167V174M424.5 167V177M425.5 166V178M426.5 168V177M427.5 167V176M428.5 168V177M429.5 168V178M430.5 169V177M431.5 170V178M432.5 170V181M433.5 170V180M434.5 171V179M435.5 171V181M436.5 172V180M437.5 172V180M438.5 172V182M439.5 173V181M440.5 172V183M441.5 173V183M442.5 173V184M443.5 172V183M444.5 172V182M445.5 174V185M446.5 174V182M447.5 174V183M448.5 175V183M449.5 175V185M450.5 175V183M451.5 175V184M452.5 176V185M453.5 176V184M454.5 175V185M455.5 176V184M456.5 176V187M457.5 175V185M458.5 176V185M459.5 175V186M460.5 176V186M461.5 177V185M462.5 177V187M463.5 177V186M464.5 176V186M465.5 177V186M466.5 178V186M467.5 177V186M468.5 178V186M469.5 176V185M470.5 178V186M471.5 178V186M472.5 178V189M473.5 178V186M474.5 179V188M475.5 178V188M476.5 178V187M477.5 179V190M478.5 179V187M479.5 179V186M480.5 179V189M481.5 179V188M482.5 179V187M483.5 179V190M484.5 180V188M485.5 179V188M486.5 179V187M487.5 180V188M488.5 180V187M489.5 180V188M490.5 180V187M491.5 179V188M492.5 180V188M493.5 180V191M494.5 179V187M495.5 180V188M496.5 180V188M497.5 180V188M498.5 180V188M499.5 180V188M500.5 180V191M501.5 181V189M502.5 181V189M503.5 180V191M504.5 181V189M505.5 180V189M506.5 180V188M507.5 181V188M508.5 180V191M509.5 181V191M510.5 181V188M511.5 179V189M512.5 179V188M513.5 180V189M514.5 181V191M515.5 181V190M516.5 181V189M517.5 179V192M518.5 179V189M519.5 179V191M520.5 181V189M521.5 180V190M522.5 181V190M523.5 181V190M524.5 181V189M525.5 181V192M526.5 181V190M527.5 180V189M528.5 181V189M529.5 181V190M530.5 181V190M531.5 180V190M532.5 181V189M533.5 181V189M534.5 181V189M535.5 181V189M536.5 181V189M537.5 180V189M538.5 180V189M539.5 181V189M540.5 181V189M541.5 181V189M542.5 181V189M543.5 182V190M544.5 181V190M545.5 182V191M546.5 181V189M547.5 181V189M548.5 182V192M549.5 181V189M550.5 182V190M551.5 182V192M552.5 181V191M553.5 182V190M554.5 181V190M555.5 181V190M556.5 181V190M557.5 181V189M558.5 181V192M559.5 181V192M560.5 182V191M561.5 180V189M562.5 181V190M563.5 181V189M564.5 181V190M565.5 182V189M566.5 181V189M567.5 182V190M568.5 181V190M569.5 180V190M570.5 182V192M571.5 181V191M572.5 182V189M573.5 181V190M574.5 182V191M575.5 181V191M576.5 181V189M577.5 181V191M578.5 182V190M579.5 182V189M580.5 181V192M581.5 182V189M582.5 181V191M583.5 182V191M584.5 182V189M585.5 182V189M586.5 182V190M587.5 182V189M588.5 182V190M589.5 182V191M590.5 180V189M591.5 181V190M592.5 182V190M593.5 181V190M594.5 182V190M595.5 180V191M596.5 181V190M597.5 182V190M598.5 182V190M599.5 182V191M600.5 180V189M601.5 181V189M602.5 181V190M603.5 180V190M604.5 182V189M605.5 182V191M606.5 181V192M607.5 181V190M608.5 182V189M609.5 182V189M610.5 182V190M611.5 182V191M612.5 182V190M613.5 181V189M614.5 182V190M615.5 180V192M616.5 182V189M617.5 182V190M618.5 182V190M619.5 181V190M620.5 181V191M621.5 182V190M622.5 181V190M623.5 181V191M624.5 182V192M625.5 181V189M626.5 182V191M627.5 182V190M628.5 181V189M629.5 181V189M630.5 181V189M631.5 181V190M632.5 181V191M633.5 182V191M634.5 182V191M635.5 181V190M636.5 181V190M637.5 182V192M638.5 182V190M639.5 181V191M640.5 182V189M641.5 181V189M642.5 182V190M643.5 181V190M644.5 181V189M645.5 181V190M646.5 181V189M647.5 182V189M648.5 182V189M649.5 181V190M650.5 180V190M651.5 182V191M652.5 181V190M653.5 181V191M654.5 182V190M655.5 182V192M656.5 181V190M657.5 182V190M658.5 182V190M659.5 180V189M660.5 181V190M661.5 182V192M662.5 182V189M663.5 181V190M664.5 182V191M665.5 182V190M666.5 182V190M667.5 181V189M668.5 181V190M669.5 181V192M670.5 181V192M671.5 182V190M672.5 180V190M673.5 181V190M674.5 181V190M675.5 182V192M676.5 181V191M677.5 180V189M678.5 181V189M679.5 180V191M680.5 181V190M681.5 181V189M682.5 181V189M683.5 181V189M684.5 182V191M685.5 182V190M686.5 181V190M687.5 182V189M688.5 181V190M689.5 181V191M690.5 181V189M691.5 181V190M692.5 182V190M693.5 180V192M694.5 181V191M695.5 182V189M696.5 181V190M697.5 181V191M698.5 181V189M699.5 181V189M700.5 182V190M701.5 181V189M702.5 180V191M703.5 181V190M704.5 181V189M705.5 181V189M706.5 181V192M707.5 181V190M708.5 182V190M709.5 182V191M710.5 180V189M711.5 181V190M712.5 181V189M713.5 181V193M714.5 181V192M715.5 181V189M716.5 181V191M717.5 181V190M718.5 181V190M719.5 181V189M720.5 181V189M721.5 181V189M722.5 182V191M723.5 182V189M724.5 181V189M725.5 181V190M726.5 181V189M727.5 181V192M728.5 181V191M729.5 180V192M730.5 181V189M731.5 182V189M732.5 180V189M733.5 182V191M734.5 181V189M735.5 180V190M736.5 181V189M737.5 181V190M738.5 181V189M739.5 181V189M740.5 182V189M741.5 180V189M742.5 181V189M743.5 181V189M744.5 181V189M745.5 180V190M746.5 181V190M747.5 181V191M748.5 181V189M749.5 181V191M750.5 181V189M751.5 181V189M752.5 181V189M753.5 180V189M754.5 181V189M755.5 181V188M756.5 181V189M757.5 181V188M758.5 181V189M759.5 181V191M760.5 181V189M761.5 181V189M762.5 181V189M763.5 180V192M764.5 181V189M765.5 181V191M766.5 180V189M767.5 180V189M768.5 181V191M769.5 181V189M770.5 179V188M771.5 179V189M772.5 181V188M773.5 181V191M774.5 181V188M775.5 181V189M776.5 179V191M777.5 181V190M778.5 181V191M779.5 181V191M780.5 181V189M781.5 181V191M782.5 181V189M783.5 180V189M784.5 181V189M785.5 181V188M786.5 180V190M787.5 181V191M788.5 181V189M789.5 179V191M790.5 180V189M791.5 180V190M792.5 180V188M793.5 181V189M794.5 180V190M795.5 180V190M796.5 181V188M797.5 181V190M798.5 181V190M799.5 179V188M800.5 180V191M801.5 180V191M802.5 180V189M803.5 181V189M804.5 180V191M805.5 181V189M806.5 180V190M807.5 181V189M808.5 181V189M809.5 180V191M810.5 181V189M811.5 180V190M812.5 180V189M813.5 181V188M814.5 181V189M815.5 180V189M816.5 180V189M817.5 181V189M818.5 181V189M819.5 181V191M820.5 181V188M821.5 179V190M822.5 179V191M823.5 181V189M824.5 181V191M825.5 180V188M826.5 180V189M827.5 180V189M828.5 181V189M829.5 181V190M830.5 180V190M831.5 180V189M832.5 181V189M833.5 181V188M834.5 180V188M835.5 181V189M836.5 181V188M837.5 181V189M838.5 180V189M839.5 181V189M840.5 181V190M841.5 181V192M842.5 180V189M843.5 180V188M844.5 181V189M845.5 181V189M846.5 181V188M847.5 181V191M848.5 181V190M849.5 181V191M850.5 181V191M851.5 181V191M852.5 181V189M853.5 180V189M854.5 181V188M855.5 181V189M856.5 181V189M857.5 181V189M858.5 180V188M859.5 181V190M860.5 179V190M861.5 181V189M862.5 179V189M863.5 180V188M864.5 180V189M865.5 181V189M866.5 181V190M867.5 181V188M868.5 181V190M869.5 180V188M870.5 181V189M871.5 180V188M872.5 180V188M873.5 181V189M874.5 181V188M875.5 181V189M876.5 179V189M877.5 181V191M878.5 181V189M879.5 181V191M880.5 180V189M881.5 181V190M882.5 181V189M883.5 181V189M884.5 181V190M885.5 181V188M886.5 181V189M887.5 181V188M888.5 181V188M889.5 181V189M890.5 181V188M891.5 181V190M892.5 181V189M893.5 181V189M894.5 180V189M895.5 180V189M896.5 181V189M897.5 181V188M898.5 180V190M899.5 181V189M900.5 181V191M901.5 181V189M902.5 180V189M903.5 180V188M904.5 179V189M905.5 180V189M906.5 180V189M907.5 181V189M908.5 181V189M909.5 181V189M910.5 179V188M911.5 179V189M912.5 181V189M913.5 181V188M914.5 181V189M915.5 181V189M916.5 179V191M917.5 181V191M918.5 181V190M919.5 180V191M920.5 181V189M921.5 181V191M922.5 181V189M923.5 181V189M924.5 179V191M925.5 181V190M926.5 179V189M927.5 180V188M928.5 181V189M929.5 181V189M930.5 181V189M931.5 181V191M932.5 181V191M933.5 180V189M934.5 181V188M935.5 180V189M936.5 181V190M937.5 180V189M938.5 181V190M939.5 180V188M940.5 181V189M941.5 181V191M942.5 180V190M943.5 181V190M944.5 180V189M945.5 180V189M946.5 180V189M947.5 181V191M948.5 180V189M949.5 180V188M950.5 181V189M951.5 180V189M952.5 181V190M953.5 181V190M954.5 180V189M955.5 179V189M956.5 181V191M957.5 180V189M958.5 181V188M959.5 179V188M960.5 181V189M961.5 181V189M962.5 179V189M963.5 179V189M964.5 181V189M965.5 181V189M966.5 179V189M967.5 181V188M968.5 181V189M969.5 181V190M970.5 181V189M971.5 181V189M972.5 181V191M973.5 181V188M974.5 181V191M975.5 181V189M976.5 181V191M977.5 180V189M978.5 181V189M979.5 180V189M980.5 181V189M981.5 181V189M982.5 181V189M983.5 181V189M984.5 182V192M985.5 181V191M986.5 181V192M987.5 181V189M988.5 181V191M989.5 181V189M990.5 181V190M991.5 182V189M992.5 181V191M993.5 181V190M994.5 182V189M995.5 181V189M996.5 182V190M997.5 181V190M998.5 182V190M999.5 181V189M1000.5 181V189M1001.5 180V190M1002.5 181V190M1003.5 182V191M1004.5 181V189M1005.5 182V189M1006.5 182V189M1007.5 182V190M1008.5 181V189M1009.5 181V191M1010.5 181V189M1011.5 181V190M1012.5 181V189M1013.5 181V189M1014.5 182V191M1015.5 180V191M1016.5 181V189M1017.5 182V189M1018.5 181V189M1019.5 181V190M1020.5 180V189M1021.5 181V189M1022.5 181V189M1023.5 181V190M1024.5 182V189M1025.5 181V189M1026.5 181V190M1027.5 181V189M1028.5 181V189M1029.5 182V192M1030.5 181V190M1031.5 180V189M1032.5 182V189M1033.5 181V190M1034.5 181V190M1035.5 182V189M1036.5 180V192M1037.5 181V190M1038.5 181V191M1039.5 182V190M1040.5 182V189M1041.5 181V190M1042.5 182V190M1043.5 180V190M1044.5 182V192M1045.5 181V190M1046.5 181V190M1047.5 181V191M1048.5 181V191M1049.5 181V190M1050.5 181V192M1051.5 180V191M1052.5 182V189M1053.5 181V189M1054.5 181V189M1055.5 181V193M1056.5 180V189M1057.5 180V192M1058.5 182V190M1059.5 181V190M1060.5 182V192M1061.5 181V190M1062.5 182V189M1063.5 182V189M1064.5 180V193M1065.5 182V189M1066.5 182V192M1067.5 182V192M1068.5 180V190M1069.5 182V189M1070.5 182V189M1071.5 182V190M1072.5 181V191M1073.5 182V190M1074.5 181V190M1075.5 182V189M1076.5 182V190M1077.5 182V190M1078.5 181V189M1079.5 182V190M1080.5 182V190M1081.5 182V191M1082.5 182V191M1083.5 182V190M1084.5 182V189M1085.5 182V190M1086.5 182V190M1087.5 182V191M1088.5 181V190M1089.5 182V191M1090.5 182V191M1091.5 182V190M1092.5 182V189M1093.5 182V190M1094.5 182V190M1095.5 181V190M1096.5 181V192M1097.5 182V189M1098.5 182V192M1099.5 182V191M1100.5 182V190M1101.5 181V190M1102.5 183V190M1103.5 182V190M1104.5 182V190M1105.5 182V190M1106.5 181V190M1107.5 182V190M1108.5 182V193M1109.5 182V191M1110.5 182V190M1111.5 182V190M1112.5 182V191M1113.5 182V190M1114.5 182V190M1115.5 182V190M1116.5 182V190M1117.5 181V191M1118.5 183V190M1119.5 181V193M1120.5 181V191M1121.5 182V193M1122.5 182V193M1123.5 183V192M1124.5 182V192M1125.5 182V191M1126.5 182V190M1127.5 182V193M1128.5 182V191M1129.5 182V190M1130.5 182V190M1131.5 183V190M1132.5 182V192M1133.5 182V190M1134.5 181V191M1135.5 182V190M1136.5 183V190M1137.5 182V190M1138.5 182V191M1139.5 182V191M1140.5 181V191M1141.5 182V190M1142.5 182V191M1143.5 182V191M1144.5 180V191M1145.5 182V191M1146.5 182V193M1147.5 182V191M1148.5 182V190M1149.5 183V193M1150.5 182V191M1151.5 182V193M1152.5 182V192M1153.5 182V190M1154.5 182V191M1155.5 183V192M1156.5 180V191M1157.5 181V190M1158.5 182V190M1159.5 182V191M1160.5 182V190M1161.5 182V191M1162.5 181V191M1163.5 183V191M1164.5 182V192M1165.5 183V191M1166.5 183V190M1167.5 183V191M1168.5 182V190M1169.5 182V193M1170.5 183V191M1171.5 182V190M1172.5 182V190M1173.5 181V191M1174.5 183V191M1175.5 183V190M1176.5 183V193M1177.5 183V190M1178.5 182V192M1179.5 183V191M1180.5 183V191M1181.5 183V190M1182.5 182V191M1183.5 182V191M1184.5 183V191M1185.5 183V193M1186.5 183V190M1187.5 182V190M1188.5 181V191M1189.5 183V193M1190.5 183V190M1191.5 183V190M1192.5 183V191M1193.5 182V191M1194.5 182V192M1195.5 181V192M1196.5 183V191M1197.5 183V191M1198.5 183V191M1199.5 182V191M1200.5 183V193M1201.5 183V192M1202.5 183V191M1203.5 183V192M1204.5 183V191M1205.5 183V191M1206.5 183V192M1207.5 182V191M1208.5 183V192M1209.5 183V191M1210.5 182V191M1211.5 183V192M1212.5 182V193M1213.5 183V193M1214.5 181V193M1215.5 182V191M1216.5 183V191M1217.5 183V193M1218.5 183V191M1219.5 183V193M1220.5 181V191M1221.5 181V191M1222.5 183V191M1223.5 183V191M1224.5 183V191M1225.5 183V194M1226.5 183V193M1227.5 182V190M1228.5 183V192M1229.5 183V192M1230.5 183V191M1231.5 183V194M1232.5 183V191M1233.5 182V191M1234.5 183V191M1235.5 182V191M1236.5 183V193M1237.5 183V191M1238.5 183V191M1239.5 183V191M1240.5 181V192M1241.5 183V192M1242.5 183V191M1243.5 184V191M1244.5 183V192M1245.5 183V191M1246.5 181V193M1247.5 183V193M1248.5 183V192M1249.5 183V191M1250.5 183V191M1251.5 183V191M1252.5 183V191M1253.5 183V192M1254.5 183V191M1255.5 183V192M1256.5 183V192M1257.5 183V192M1258.5 183V191M1259.5 183V192M1260.5 183V192M1261.5 184V192M1262.5 183V191M1263.5 183V192M1264.5 183V191M1265.5 183V191M1266.5 182V191M1267.5 183V192M1268.5 182V191M1269.5 183V191M1270.5 182V192M1271.5 183V192M1272.5 183V191M1273.5 183V191M1274.5 183V192M1275.5 183V191M1276.5 183V191M1277.5 183V193M1278.5 183V191M1279.5 183V191M1280.5 182V192M1281.5 183V192M1282.5 183V193M1283.5 183V192M1284.5 182V192M1285.5 182V191M1286.5 184V193M1287.5 184V194M1288.5 183V192M1289.5 183V191M1290.5 183V191M1291.5 183V192M1292.5 183V192M1293.5 183V192M1294.5 183V193M1295.5 183V191M1296.5 183V191M1297.5 183V192M1298.5 183V191M1299.5 183V191M1300.5 183V191M1301.5 183V191M1302.5 183V191M1303.5 183V191M1304.5 183V193M1305.5 182V191M1306.5 183V191M1307.5 183V191M1308.5 183V191M1309.5 182V191M1310.5 183V192M1311.5 184V191M1312.5 183V191M1313.5 183V191M1314.5 181V191M1315.5 183V190M1316.5 184V191M1317.5 183V192M1318.5 183V193M1319.5 183V191M1320.5 184V194M1321.5 182V193M1322.5 183V191M1323.5 183V194M1324.5 184V190M1325.5 183V192M1326.5 183V191M1327.5 183V191M1328.5 182V191M1329.5 182V190M1330.5 183V191M1331.5 182V193M1332.5 183V191M1333.5 183V191M1334.5 183V190M1335.5 183V191M1336.5 183V193M1337.5 183V191M1338.5 183V193M1339.5 183V192M1340.5 183V193M1341.5 183V192M1342.5 183V191M1343.5 184V190M1344.5 183V194M1345.5 183V192M1346.5 183V193M1347.5 181V193M1348.5 184V191M1349.5 183V192M1350.5 183V191M1351.5 184V190M1352.5 183V191M1353.5 183V192M1354.5 183V191M1355.5 183V192M1356.5 183V191M1357.5 183V192M1358.5 183V193M1359.5 181V192M1360.5 183V191M1361.5 183V192M1362.5 183V193M1363.5 183V191M1364.5 182V191M1365.5 181V191M1366.5 183V193M1367.5 183V191M1368.5 184V190M1369.5 183V194M1370.5 183V194M1371.5 183V192M1372.5 183V191M1373.5 183V191M1374.5 181V191M1375.5 183V191M1376.5 182V215M1377.5 207V240M1378.5 231V252M1379.5 240V250M1380.5 238V248M1381.5 236V247M1382.5 234V244M1383.5 233V243M1384.5 232V241M1385.5 230V240M1386.5 229V238M1387.5 228V240M1388.5 227V236M1389.5 226V235M1390.5 226V237M1391.5 225V234M1392.5 224V233M1393.5 222V231M1394.5 222V231M1395.5 221V231M1396.5 222V232M1397.5 220V230M1398.5 220V228M1399.5 220V230M1400.5 219V228M1401.5 219V226M1402.5 219V229M1403.5 218V226M1404.5 216V225M1405.5 217V225M1406.5 216V228M1407.5 216V224M1408.5 216V224M1409.5 216V224M1410.5 215V223M1411.5 213V223M1412.5 214V225M1413.5 214V223M1414.5 212V223M1415.5 213V222M1416.5 214V224M1417.5 213V224M1418.5 213V222M1419.5 212V221M1420.5 212V222M1421.5 212V221M1422.5 211V220M1423.5 213V220M1424.5 212V220M1425.5 211V220M1426.5 211V220M1427.5 211V219M1428.5 210V219M1429.5 211V219M1430.5 211V221M1431.5 210V218M1432.5 210V221M1433.5 210V218M1434.5 210V219M1435.5 210V218M1436.5 210V218M1437.5 209V218M1438.5 210V217M1439.5 210V219M1440.5 209V218M1441.5 210V218M1442.5 209V217M1443.5 209V217M1444.5 209V217M1445.5 209V218M1446.5 208V216M1447.5 208V218M1448.5 209V217M1449.5 207V217M1450.5 208V219M1451.5 208V217M1452.5 209V216M1453.5 206V216M1454.5 208V218M1455.5 208V216M1456.5 208V216M1457.5 207V217M1458.5 208V215M1459.5 208V216M1460.5 187V216M1461.5 149V196M1462.5 149V158M1463.5 150V159M1464.5 151V160M1465.5 152V162M1466.5 151V161M1467.5 154V165M1468.5 155V164M1469.5 156V164M1470.5 156V165M1471.5 157V168M1472.5 157V168M1473.5 158V168M1474.5 158V167M1475.5 160V168M1476.5 159V168M1477.5 160V172M1478.5 161V170M1479.5 162V172M1480.5 162V171M1481.5 163V171M1482.5 163V172M1483.5 164V172M1484.5 164V173M1485.5 165V173M1486.5 165V174M1487.5 165V174M1488.5 165V176M1489.5 166V177M1490.5 167V176M1491.5 167V177M1492.5 168V178M1493.5 168V176M1494.5 169V179M1495.5 169V180M1496.5 169V177M1497.5 170V178M1498.5 170V178M1499.5 169V178M1500.5 170V179M1501.5 171V180M1502.5 170V180M1503.5 172V180M1504.5 171V179M1505.5 172V179M1506.5 171V180M1507.5 172V181M1508.5 172V183M1509.5 172V181M1510.5 173V182M1511.5 172V182M1512.5 172V181M1513.5 174V182M1514.5 174V182M1515.5 173V183M1516.5 174V183M1517.5 173V183M1518.5 174V183M1519.5 174V183M1520.5 175V183M1521.5 174V184M1522.5 175V184M1523.5 175V184M1524.5 175V183M1525.5 175V183M1526.5 176V186M1527.5 176V186M1528.5 174V186M1529.5 175V186M1530.5 176V185M1531.5 176V185M1532.5 177V184M1533.5 176V184M1534.5 177V187M1535.5 177V187M1536.5 177V186M1537.5 177V185M1538.5 177V185M1539.5 177V188M1540.5 177V185M1541.5 177V187M1542.5 177V185M1543.5 178V185M1544.5 177V188M1545.5 177V187M1546.5 178V187M1547.5 178V185M1548.5 178V187M1549.5 178V188M1550.5 176V186M1551.5 178V187M1552.5 179V186M1553.5 178V186M1554.5 178V188M1555.5 178V186M1556.5 178V186M1557.5 179V189M1558.5 178V187M1559.5 179V187M1560.5 178V186M1561.5 178V186M1562.5 179V187M1563.5 178V189M1564.5 179V187M1565.5 179V187M1566.5 179V187M1567.5 179V190M1568.5 179V187M1569.5 179V187M1570.5 179V187M1571.5 179V188M1572.5 180V188M1573.5 179V188M1574.5 179V188M1575.5 179V187M1576.5 179V189M1577.5 179V187M1578.5 178V188M1579.5 179V188M1580.5 179V187M1581.5 179V187M1582.5 179V190M1583.5 179V189M1584.5 179V188M1585.5 179V187M1586.5 178V189M1587.5 178V188M1588.5 179V187M1589.5 180V188M1590.5 179V187M1591.5 179V189M1592.5 179V187M1593.5 179V187M1594.5 180V188M1595.5 180V187M1596.5 180V188M1597.5 179V190M1598.5 180V187M1599.5 179V188M1600.5 179V187M1601.5 179V189M1602.5 180V187M1603.5 179V190M1604.5 180V189M1605.5 178V188M1606.5 178V188M1607.5 180V190M1608.5 178V188M1609.5 179V190M1610.5 179V188M1611.5 178V187M1612.5 179V190M1613.5 179V187M1614.5 180V188M1615.5 178V188M1616.5 180V190M1617.5 180V189M1618.5 180V188M1619.5 180V187M1620.5 180V187M1621.5 180V188M1622.5 180V188M1623.5 180V188M1624.5 180V189M1625.5 180V190M1626.5 179V190M1627.5 179V187M1628.5 180V190M1629.5 179V187M1630.5 179V189M1631.5 179V190M1632.5 179V188M1633.5 179V188M1634.5 179V188M1635.5 180V189M1636.5 180V188M1637.5 180V189M1638.5 179V190M1639.5 180V188M1640.5 180V187M1641.5 179V190M1642.5 179V190M1643.5 180V188M1644.5 180V187M1645.5 178V189M1646.5 180V188M1647.5 179V188M1648.5 179V188M1649.5 180V188M1650.5 179V188M1651.5 180V188M1652.5 180V189M1653.5 179V189M1654.5 179V188M1655.5 180V191M1656.5 180V189M1657.5 180V190M1658.5 180V188M1659.5 180V188M1660.5 179V188M1661.5 180V188M1662.5 180V188M1663.5 180V188M1664.5 180V188M1665.5 180V188M1666.5 180V188M1667.5 180V188M1668.5 179V188M1669.5 180V189M1670.5 180V189M1671.5 180V188M1672.5 179V191M1673.5 180V187M1674.5 180V189M1675.5 180V188M1676.5 179V189M1677.5 181V188M1678.5 180V189M1679.5 180V188M1680.5 179V189M1681.5 180V189M1682.5 180V188M1683.5 180V188M1684.5 179V188M1685.5 180V188M1686.5 180V187M1687.5 180V189M1688.5 180V188M1689.5 179V190M1690.5 180V189M1691.5 180V188M1692.5 180V188M1693.5 179V188M1694.5 180V189M1695.5 180V188M1696.5 180V188M1697.5 180V188M1698.5 180V188M1699.5 179V188M1700.5 180V189M1701.5 180V189M1702.5 180V188M1703.5 180V189M1704.5 180V188M1705.5 181V191M1706.5 179V190M1707.5 179V188M1708.5 180V188M1709.5 180V190M1710.5 180V190M1711.5 179V189"/><path stroke="#22c6cf" d="M13.5 656V660M14.5 656V660M16.5 656V660M17.5 656V660M18.5 656V660M20.5 656V660M22.5 656V660M24.5 656V660M26.5 656V660M29.5 656V660M30.5 656V660M31.5 656V660M33.5 656V660M34.5 656V660M35.5 656V660M36.5 656V660M37.5 656V660M38.5 656V660M40.5 655V660M41.5 656V660M42.5 656V660M45.5 656V660M48.5 656V660M50.5 656V660M54.5 656V660M55.5 656V661M57.5 656V660M58.5 656V661M60.5 656V660M61.5 655V660M63.5 656V660M65.5 656V660M66.5 656V660M67.5 656V660M68.5 656V661M69.5 656V660M71.5 656V660M73.5 656V660M75.5 656V660M76.5 656V660M77.5 656V661M78.5 656V661M79.5 656V660M80.5 656V660M81.5 656V660M82.5 656V660M83.5 656V660M84.5 656V660M85.5 656V660M86.5 656V660M87.5 655V660M88.5 656V660M89.5 656V661M91.5 656V660M92.5 656V660M93.5 656V660M94.5 656V661M95.5 656V660M97.5 656V660M98.5 656V660M99.5 656V660M100.5 656V660M102.5 656V660M105.5 656V660M107.5 655V660M108.5 656V660M109.5 656V660M110.5 656V661M112.5 656V660M113.5 656V660M114.5 656V661M116.5 656V660M118.5 656V661M120.5 656V660M121.5 656V660M123.5 656V661M124.5 655V660M125.5 656V660M126.5 656V660M127.5 656V660M130.5 656V660M131.5 656V660M133.5 656V660M134.5 656V660M135.5 656V660M136.5 656V660M139.5 656V660M143.5 655V660M145.5 656V660M146.5 656V660M147.5 656V660M148.5 656V660M149.5 656V660M151.5 656V660M152.5 656V660M155.5 656V660M159.5 655V660M160.5 656V660M161.5 656V660M163.5 656V660M165.5 656V660M166.5 656V660M167.5 656V660M170.5 656V660M171.5 656V660M172.5 656V660M173.5 656V660M174.5 656V660M176.5 656V660M179.5 655V660M180.5 656V660M183.5 656V660M185.5 656V660M186.5 656V660M188.5 656V660M189.5 656V660M191.5 655V660M197.5 656V660M199.5 656V660M202.5 656V660M203.5 656V660M205.5 656V660M207.5 656V660M208.5 656V660M209.5 656V660M210.5 656V660M211.5 656V660M213.5 656V660M214.5 656V660M215.5 656V660M216.5 656V660M218.5 656V660M219.5 656V660M221.5 656V660M222.5 656V660M224.5 656V660M225.5 656V660M226.5 656V661M227.5 656V660M233.5 656V660M234.5 656V660M235.5 656V661M236.5 656V660M237.5 656V660M238.5 656V660M239.5 656V660M241.5 656V660M242.5 655V660M243.5 656V661M244.5 656V660M247.5 656V660M251.5 655V660M254.5 656V660M255.5 656V660M256.5 656V661M258.5 656V660M259.5 656V660M260.5 656V660M262.5 656V660M263.5 656V660M265.5 656V661M266.5 656V661M269.5 655V660M270.5 656V660M271.5 656V661M273.5 655V661M274.5 656V660M275.5 656V660M276.5 656V660M277.5 656V660M278.5 656V660M279.5 656V660M281.5 656V660M284.5 656V660M286.5 655V660M287.5 656V660M289.5 656V660M290.5 656V660M292.5 655V660M293.5 656V660M294.5 656V661M295.5 656V660M297.5 656V661M301.5 656V661M302.5 656V661M303.5 656V660M304.5 656V661M305.5 656V660M308.5 656V660M310.5 656V660M316.5 383V387M318.5 384V387M319.5 384V387M321.5 384V389M322.5 384V388M325.5 384V388M328.5 384V388M331.5 384V388M332.5 384V388M335.5 384V388M336.5 384V388M337.5 384V388M338.5 384V388M341.5 384V388M342.5 384V388M343.5 384V388M347.5 384V388M348.5 384V388M350.5 384V388M351.5 384V388M352.5 384V388M353.5 384V388M354.5 384V388M355.5 384V388M356.5 384V388M357.5 384V388M358.5 384V388M363.5 384V388M364.5 384V388M365.5 384V388M367.5 384V388M369.5 384V389M370.5 384V388M371.5 384V388M372.5 384V388M373.5 384V388M374.5 384V388M378.5 384V388M379.5 384V388M380.5 384V388M381.5 384V389M383.5 384V388M384.5 384V388M385.5 384V388M388.5 384V388M389.5 384V388M390.5 384V388M391.5 384V388M392.5 384V389M393.5 384V388M394.5 384V388M395.5 384V388M396.5 384V388M403.5 656V660M406.5 656V660M407.5 655V660M410.5 656V660M411.5 656V660M412.5 656V660M413.5 656V660M415.5 656V660M417.5 656V660M421.5 656V660M422.5 656V660M423.5 656V660M424.5 656V660M427.5 656V660M428.5 656V660M435.5 656V660M437.5 656V660M439.5 656V660M440.5 656V660M441.5 656V660M442.5 656V660M443.5 656V660M446.5 655V660M448.5 656V660M449.5 656V660M450.5 656V660M451.5 656V660M452.5 656V660M456.5 656V660M457.5 656V660M458.5 656V660M459.5 656V660M460.5 656V660M461.5 656V660M462.5 656V660M463.5 656V660M464.5 656V661M467.5 656V660M468.5 656V660M469.5 656V660M472.5 656V660M473.5 656V660M475.5 656V660M476.5 656V660M477.5 656V660M478.5 656V660M479.5 656V660M480.5 656V660M481.5 656V660M483.5 656V660M485.5 656V660M487.5 656V660M492.5 655V660M494.5 656V660M496.5 656V660M497.5 656V660M498.5 656V660M499.5 656V660M502.5 656V660M503.5 656V660M505.5 656V660M506.5 656V660M507.5 655V660M509.5 656V661M510.5 656V660M511.5 656V660M512.5 656V660M513.5 656V660M515.5 656V660M516.5 656V660M517.5 656V660M519.5 656V660M521.5 656V660M523.5 656V660M525.5 656V661M528.5 656V660M529.5 656V660M530.5 656V660M531.5 655V660M535.5 656V660M536.5 656V660M538.5 656V660M539.5 656V660M541.5 656V660M543.5 656V660M545.5 656V660M547.5 656V660M548.5 656V660M549.5 656V660M550.5 656V660M554.5 656V660M556.5 656V660M557.5 656V660M558.5 656V660M559.5 656V660M560.5 656V660M561.5 656V660M562.5 655V660M563.5 656V660M564.5 656V661M567.5 656V660M570.5 656V661M572.5 656V660M573.5 655V660M574.5 656V660M576.5 656V660M577.5 656V660M580.5 656V660M581.5 656V660M582.5 656V661M583.5 656V660M584.5 656V660M586.5 656V660M587.5 656V660M588.5 655V660M590.5 656V660M591.5 656V660M592.5 656V661M593.5 656V661M594.5 656V660M596.5 656V660M597.5 656V660M598.5 656V660M599.5 656V660M600.5 656V660M602.5 656V660M603.5 656V660M604.5 656V660M605.5 656V660M607.5 656V660M610.5 656V660M611.5 656V660M613.5 656V660M614.5 656V660M617.5 655V660M618.5 656V660M619.5 656V660M620.5 655V660M624.5 656V660M625.5 656V660M626.5 655V660M628.5 656V660M629.5 656V660M630.5 656V660M631.5 656V660M632.5 656V660M633.5 656V660M634.5 656V661M635.5 655V660M636.5 656V660M637.5 656V660M640.5 655V660M641.5 656V660M642.5 656V660M643.5 656V660M644.5 656V660M645.5 656V660M646.5 656V660M647.5 656V660M649.5 656V660M650.5 656V660M651.5 656V660M652.5 656V661M653.5 656V661M654.5 656V660M655.5 656V660M656.5 656V660M658.5 656V660M660.5 656V661M662.5 656V661M663.5 656V661M664.5 656V660M665.5 656V661M666.5 655V660M667.5 656V661M668.5 656V660M669.5 655V660M670.5 656V660M671.5 656V660M675.5 656V660M677.5 656V660M678.5 656V660M680.5 656V660M682.5 656V660M687.5 656V660M691.5 656V660M697.5 656V660M698.5 656V660M699.5 655V661M700.5 656V660M702.5 656V660M703.5 656V660M704.5 656V660M705.5 656V660M708.5 655V661M709.5 656V661M710.5 656V660M711.5 656V660M713.5 656V660M714.5 656V660M715.5 656V660M717.5 656V660M718.5 656V660M719.5 656V660M720.5 656V660M721.5 656V660M723.5 656V661M724.5 656V660M725.5 656V660M726.5 656V660M727.5 656V660M728.5 656V660M729.5 656V660M730.5 655V660M731.5 656V661M732.5 656V660M733.5 656V660M734.5 656V660M735.5 656V660M736.5 656V660M738.5 656V660M739.5 656V661M740.5 656V660M742.5 656V660M743.5 656V660M747.5 656V660M752.5 656V660M753.5 656V660M754.5 656V660M755.5 656V660M756.5 656V661M757.5 656V660M759.5 656V660M761.5 656V660M762.5 655V661M764.5 656V660M766.5 656V660M767.5 656V661M768.5 655V660M769.5 656V660M770.5 656V661M771.5 656V660M772.5 655V660M773.5 655V660M775.5 656V660M776.5 656V660M777.5 656V660M779.5 656V660M780.5 656V660M781.5 656V660M782.5 656V660M783.5 656V660M787.5 656V660M789.5 656V660M790.5 656V660M791.5 656V660M793.5 656V660M794.5 656V660M796.5 656V660M797.5 656V660M798.5 656V660M799.5 656V660M800.5 656V660M801.5 656V660M803.5 656V660M804.5 656V661M805.5 656V660M806.5 656V660M807.5 656V660M808.5 656V661M809.5 656V660M811.5 656V660M813.5 656V660M817.5 656V660M819.5 656V660M820.5 656V660M821.5 656V660M822.5 656V660M824.5 656V660M825.5 656V660M826.5 656V660M829.5 656V660M831.5 656V660M832.5 656V660M834.5 656V660M835.5 656V660M837.5 656V660M838.5 656V660M839.5 656V660M841.5 656V660M844.5 656V660M845.5 656V660M846.5 656V660M847.5 656V660M848.5 656V660M849.5 655V660M850.5 656V660M851.5 656V660M852.5 656V660M853.5 656V660M854.5 656V660M855.5 656V660M856.5 655V660M857.5 656V660M858.5 656V660M860.5 655V660M861.5 656V660M863.5 656V660M864.5 655V660M865.5 656V661M866.5 656V660M867.5 656V660M868.5 656V660M869.5 656V660M871.5 656V660M873.5 656V660M874.5 656V660M875.5 656V661M876.5 656V660M877.5 656V661M878.5 656V661M879.5 656V660M880.5 656V660M881.5 656V660M883.5 656V660M884.5 656V660M885.5 656V660M886.5 656V660M887.5 656V660M888.5 656V660M890.5 656V660M891.5 656V660M893.5 656V660M894.5 656V660M896.5 656V660M897.5 656V660M899.5 655V660M900.5 656V661M902.5 656V660M904.5 656V660M905.5 656V660M906.5 655V660M907.5 656V660M908.5 656V660M909.5 656V660M910.5 656V660M911.5 656V660M912.5 656V660M913.5 656V660M915.5 656V660M916.5 656V660M918.5 656V660M919.5 656V660M920.5 656V660M921.5 656V660M923.5 656V660M924.5 656V660M925.5 656V660M926.5 656V660M927.5 656V660M930.5 656V660M932.5 656V660M933.5 656V660M935.5 656V660M936.5 656V660M939.5 655V660M940.5 656V660M941.5 656V661M942.5 656V660M943.5 655V660M946.5 656V660M947.5 656V660M948.5 656V660M950.5 656V661M951.5 656V660M953.5 655V660M954.5 656V660M956.5 656V660M958.5 656V660M959.5 656V660M960.5 656V660M961.5 656V660M963.5 656V660M965.5 656V660M967.5 656V660M968.5 656V660M969.5 655V660M970.5 656V660M971.5 656V660M972.5 656V661M973.5 656V660M974.5 656V660M975.5 656V660M976.5 656V660M977.5 656V660M979.5 656V660M980.5 656V660M981.5 656V661M983.5 656V660M984.5 656V660M985.5 655V660M988.5 656V660M991.5 656V660M992.5 656V661M993.5 656V660M994.5 656V660M995.5 656V660M996.5 656V661M997.5 656V660M998.5 656V660M1000.5 656V660M1002.5 656V660M1003.5 656V660M1005.5 656V660M1006.5 656V661M1008.5 656V660M1009.5 656V660M1010.5 656V660M1011.5 656V660M1012.5 656V661M1013.5 655V660M1014.5 655V660M1015.5 656V660M1018.5 656V660M1019.5 656V660M1020.5 656V660M1021.5 656V660M1023.5 656V660M1024.5 656V660M1025.5 656V660M1026.5 655V660M1030.5 655V660M1031.5 656V660M1032.5 656V660M1033.5 656V660M1034.5 656V660M1035.5 655V660M1036.5 656V660M1037.5 656V660M1039.5 656V660M1040.5 655V660M1042.5 656V660M1043.5 656V660M1044.5 656V660M1045.5 656V660M1046.5 656V660M1050.5 656V660M1051.5 656V661M1052.5 656V660M1053.5 656V661M1054.5 656V661M1055.5 656V660M1058.5 656V660M1059.5 656V661M1060.5 656V660M1061.5 656V660M1064.5 656V660M1065.5 656V660M1066.5 656V660M1067.5 656V661M1069.5 656V660M1070.5 656V660M1071.5 655V660M1073.5 656V660M1074.5 656V660M1075.5 656V660M1076.5 656V660M1077.5 656V660M1078.5 656V660M1079.5 656V660M1080.5 656V660M1081.5 656V660M1084.5 656V660M1085.5 656V660M1088.5 656V660M1089.5 656V660M1091.5 656V660M1092.5 656V660M1094.5 655V660M1095.5 656V660M1096.5 656V660M1097.5 656V660M1099.5 656V660M1100.5 656V660M1101.5 656V660M1102.5 656V661M1103.5 656V660M1104.5 656V660M1105.5 656V660M1106.5 656V661M1108.5 656V660M1109.5 656V660M1110.5 656V660M1111.5 656V660M1112.5 656V661M1113.5 656V661M1114.5 656V660M1115.5 655V660M1116.5 656V660M1118.5 656V660M1120.5 656V660M1122.5 656V660M1123.5 656V660M1124.5 656V660M1125.5 656V660M1129.5 656V660M1130.5 656V660M1131.5 656V660M1132.5 656V660M1134.5 656V660M1135.5 656V660M1137.5 656V661M1138.5 656V660M1140.5 656V660M1141.5 656V660M1143.5 656V660M1144.5 656V660M1145.5 656V660M1148.5 656V660M1149.5 656V661M1150.5 655V660M1152.5 656V661M1153.5 656V660M1155.5 656V660M1156.5 656V660M1157.5 656V660M1158.5 656V660M1160.5 656V660M1162.5 656V660M1166.5 656V660M1167.5 656V660M1168.5 656V660M1169.5 656V660M1170.5 656V660M1171.5 656V660M1173.5 656V660M1174.5 656V660M1175.5 656V660M1176.5 655V660M1177.5 656V660M1178.5 656V660M1180.5 656V660M1183.5 656V660M1185.5 656V660M1186.5 656V660M1187.5 656V660M1188.5 656V660M1189.5 656V660M1190.5 656V660M1191.5 656V660M1193.5 656V660M1194.5 656V660M1195.5 656V660M1196.5 656V660M1197.5 656V660M1198.5 656V660M1199.5 655V660M1201.5 656V660M1203.5 656V660M1204.5 656V660M1205.5 656V661M1206.5 656V660M1207.5 656V660M1208.5 656V660M1209.5 656V660M1210.5 656V660M1211.5 656V661M1213.5 656V660M1214.5 656V660M1217.5 656V660M1218.5 655V660M1220.5 655V660M1223.5 656V660M1224.5 656V661M1225.5 656V660M1226.5 656V660M1227.5 656V660M1228.5 656V660M1229.5 656V660M1230.5 656V660M1232.5 656V660M1234.5 656V660M1236.5 656V660M1237.5 656V660M1238.5 656V660M1239.5 656V660M1241.5 656V661M1242.5 655V660M1246.5 656V661M1247.5 656V660M1248.5 656V660M1249.5 656V660M1250.5 656V660M1251.5 656V661M1252.5 656V660M1253.5 656V660M1254.5 656V660M1256.5 656V661M1258.5 656V660M1259.5 656V660M1260.5 656V660M1261.5 656V661M1263.5 656V660M1264.5 656V660M1265.5 656V661M1266.5 656V660M1267.5 656V660M1268.5 656V660M1270.5 656V660M1271.5 655V660M1274.5 656V660M1276.5 656V660M1277.5 656V660M1279.5 655V660M1281.5 656V660M1282.5 656V660M1283.5 656V660M1286.5 656V660M1287.5 656V660M1289.5 656V661M1290.5 656V660M1291.5 656V661M1292.5 656V660M1293.5 656V660M1294.5 656V660M1296.5 656V660M1298.5 656V660M1300.5 656V660M1301.5 655V660M1303.5 655V660M1305.5 656V660M1307.5 656V660M1309.5 656V660M1310.5 656V660M1311.5 656V660M1313.5 656V660M1314.5 655V660M1315.5 656V660M1316.5 656V660M1317.5 656V660M1319.5 656V660M1321.5 656V660M1322.5 655V660M1323.5 656V660M1324.5 655V660M1325.5 656V660M1327.5 656V660M1333.5 656V660M1335.5 656V660M1336.5 656V660M1337.5 656V660M1338.5 655V660M1341.5 656V660M1342.5 656V661M1345.5 656V660M1346.5 656V660M1347.5 656V660M1351.5 656V660M1353.5 656V660M1354.5 656V661M1355.5 656V660M1356.5 656V660M1359.5 656V660M1360.5 656V660M1362.5 656V661M1364.5 656V661M1365.5 656V660M1372.5 655V660M1373.5 656V660M1375.5 656V660M1379.5 384V389M1380.5 384V388M1383.5 383V389M1385.5 384V388M1387.5 384V388M1388.5 384V388M1389.5 384V388M1390.5 384V389M1391.5 384V389M1392.5 384V388M1393.5 384V388M1394.5 384V388M1396.5 384V388M1398.5 384V388M1399.5 384V388M1401.5 384V389M1402.5 384V388M1403.5 384V388M1405.5 384V388M1406.5 384V388M1407.5 384V388M1408.5 384V388M1409.5 384V388M1410.5 384V388M1411.5 384V388M1412.5 384V388M1414.5 383V388M1416.5 384V388M1417.5 384V388M1418.5 384V388M1422.5 384V389M1423.5 384V389M1424.5 384V388M1425.5 384V389M1427.5 384V388M1428.5 384V388M1429.5 384V389M1432.5 384V388M1433.5 384V388M1434.5 384V388M1435.5 384V389M1436.5 384V388M1437.5 384V388M1438.5 384V388M1439.5 384V388M1440.5 384V388M1442.5 384V388M1443.5 384V388M1444.5 383V388M1446.5 383V388M1447.5 384V388M1449.5 384V388M1450.5 384V388M1451.5 383V389M1452.5 383V388M1453.5 384V388M1454.5 384V388M1457.5 384V389M1458.5 383V388M1459.5 384V389M1463.5 656V660M1464.5 656V660M1467.5 656V660M1468.5 656V660M1469.5 656V660M1470.5 656V660M1471.5 656V660M1472.5 656V660M1473.5 656V660M1475.5 656V661M1476.5 656V661M1477.5 656V660M1478.5 656V660M1480.5 656V660M1482.5 655V660M1483.5 656V660M1484.5 656V660M1486.5 656V660M1487.5 656V660M1488.5 656V660M1490.5 656V660M1492.5 656V660M1493.5 656V660M1494.5 656V660M1495.5 656V660M1496.5 655V661M1497.5 656V660M1499.5 656V660M1500.5 656V660M1501.5 656V660M1504.5 656V660M1508.5 656V660M1509.5 656V660M1510.5 656V660M1512.5 656V660M1513.5 656V660M1516.5 656V660M1518.5 656V660M1519.5 656V660M1521.5 656V660M1522.5 656V660M1523.5 656V660M1525.5 656V660M1526.5 656V660M1527.5 656V661M1529.5 655V660M1531.5 656V660M1532.5 656V661M1535.5 656V660M1538.5 656V660M1539.5 656V660M1540.5 656V660M1541.5 656V660M1544.5 656V660M1545.5 656V660M1546.5 656V660M1548.5 656V660M1549.5 656V660M1552.5 656V660M1553.5 655V660M1554.5 656V660M1555.5 656V660M1556.5 656V661M1557.5 656V660M1559.5 656V660M1560.5 656V660M1561.5 656V660M1562.5 656V660M1563.5 656V660M1564.5 656V661M1569.5 656V660M1570.5 655V660M1572.5 656V660M1573.5 656V660M1575.5 656V660M1577.5 656V660M1578.5 656V660M1579.5 656V660M1580.5 656V660M1581.5 656V660M1583.5 656V660M1584.5 656V660M1585.5 656V660M1588.5 656V661M1589.5 656V660M1590.5 656V660M1591.5 656V660M1592.5 656V660M1593.5 656V660M1594.5 656V660M1596.5 655V660M1597.5 656V660M1598.5 656V660M1600.5 656V660M1601.5 656V660M1602.5 656V660M1603.5 656V660M1604.5 656V660M1606.5 656V661M1607.5 656V660M1609.5 656V661M1610.5 656V660M1611.5 656V660M1612.5 656V660M1613.5 656V660M1615.5 656V660M1616.5 656V660M1620.5 656V660M1621.5 656V661M1623.5 655V660M1624.5 656V660M1626.5 656V660M1629.5 656V660M1630.5 656V660M1631.5 656V660M1632.5 655V660M1634.5 656V660M1635.5 656V660M1636.5 656V660M1637.5 656V660M1638.5 656V660M1640.5 656V661M1642.5 656V660M1643.5 656V660M1644.5 656V660M1645.5 656V660M1646.5 656V660M1648.5 655V660M1653.5 656V660M1654.5 655V660M1655.5 655V661M1657.5 656V660M1658.5 656V660M1659.5 656V660M1660.5 656V661M1661.5 655V660M1662.5 656V661M1663.5 656V660M1664.5 656V660M1665.5 656V660M1666.5 656V660M1669.5 656V660M1670.5 656V660M1671.5 656V660M1672.5 656V660M1673.5 656V661M1674.5 656V660M1677.5 656V660M1678.5 656V660M1679.5 655V660M1680.5 656V660M1684.5 656V660M1685.5 656V660M1686.5 656V660M1687.5 656V660M1688.5 656V660M1690.5 656V660M1691.5 656V660M1692.5 656V660M1693.5 656V660M1694.5 656V660M1695.5 656V660M1696.5 656V660M1697.5 656V660M1698.5 656V660M1699.5 656V660M1700.5 656V660M1701.5 656V660M1703.5 656V661M1704.5 656V660M1705.5 656V661M1706.5 656V660M1708.5 655V660M1709.5 656V660M1710.5 656V660M1711.5 656V660"/><path stroke="#1a9ea6" d="M12.5 656V661M15.5 656V660M19.5 656V660M21.5 655V660M23.5 656V660M25.5 656V661M27.5 656V660M28.5 655V660M32.5 656V660M39.5 656V660M43.5 656V660M44.5 656V660M46.5 656V660M47.5 656V661M49.5 656V660M51.5 656V660M52.5 656V660M53.5 656V660M56.5 656V660M59.5 656V660M62.5 656V661M64.5 656V660M70.5 656V661M72.5 656V660M74.5 656V660M90.5 656V660M96.5 656V660M101.5 656V660M103.5 656V661M104.5 656V660M106.5 656V661M111.5 655V660M115.5 656V660M117.5 656V660M119.5 656V660M122.5 655V660M128.5 656V660M129.5 656V660M132.5 656V660M137.5 656V660M138.5 656V660M140.5 656V660M141.5 656V660M142.5 656V660M144.5 656V660M150.5 656V660M153.5 656V660M154.5 656V660M156.5 656V660M157.5 655V660M158.5 655V660M162.5 656V660M164.5 656V660M168.5 656V660M169.5 656V661M175.5 656V660M177.5 656V660M178.5 656V660M181.5 656V660M182.5 656V660M184.5 656V660M187.5 656V660M190.5 656V660M192.5 656V660M193.5 656V661M194.5 656V660M195.5 656V660M196.5 656V660M198.5 656V660M200.5 656V660M201.5 655V660M204.5 656V660M206.5 656V660M212.5 656V660M217.5 656V660M220.5 656V660M223.5 656V660M228.5 656V660M229.5 656V660M230.5 656V660M231.5 656V660M232.5 655V660M240.5 656V660M245.5 656V660M246.5 656V660M248.5 656V660M249.5 656V660M250.5 656V660M252.5 655V661M253.5 656V660M257.5 656V660M261.5 656V660M264.5 655V660M267.5 656V660M268.5 656V660M272.5 656V660M280.5 656V660M282.5 656V660M283.5 656V660M285.5 656V660M288.5 656V660M291.5 656V660M296.5 656V660M298.5 656V660M299.5 656V661M300.5 656V660M306.5 656V661M307.5 656V660M309.5 656V660M311.5 656V660M312.5 656V660M315.5 383V387M317.5 383V387M320.5 384V389M323.5 384V388M324.5 384V388M326.5 384V388M327.5 384V388M329.5 384V388M330.5 384V388M333.5 384V388M334.5 384V388M339.5 384V388M340.5 384V388M344.5 384V388M345.5 384V388M346.5 384V388M349.5 384V388M359.5 384V388M360.5 384V389M361.5 384V388M362.5 384V388M366.5 384V388M368.5 384V388M375.5 384V389M376.5 384V388M377.5 384V388M382.5 384V388M386.5 384V388M387.5 384V388M397.5 384V388M401.5 656V660M402.5 656V660M404.5 656V660M405.5 655V660M408.5 656V661M409.5 656V661M414.5 656V660M416.5 656V660M418.5 656V660M419.5 656V660M420.5 656V660M425.5 656V661M426.5 656V660M429.5 656V660M430.5 656V660M431.5 655V660M432.5 656V660M433.5 656V660M434.5 656V660M436.5 656V661M438.5 656V661M444.5 656V660M445.5 656V660M447.5 656V660M453.5 656V660M454.5 656V660M455.5 656V660M465.5 656V660M466.5 656V660M470.5 656V661M471.5 655V660M474.5 656V660M482.5 656V660M484.5 656V660M486.5 656V660M488.5 656V660M489.5 656V660M490.5 656V660M491.5 656V660M493.5 656V660M495.5 656V660M500.5 656V661M501.5 656V660M504.5 656V660M508.5 655V660M514.5 656V660M518.5 655V661M520.5 656V660M522.5 656V660M524.5 656V660M526.5 656V660M527.5 656V661M532.5 656V660M533.5 656V660M534.5 656V660M537.5 656V660M540.5 656V660M542.5 656V660M544.5 656V661M546.5 656V660M551.5 656V660M552.5 656V660M553.5 656V660M555.5 656V660M565.5 656V660M566.5 656V660M568.5 656V660M569.5 656V660M571.5 655V660M575.5 656V660M578.5 656V660M579.5 656V660M585.5 656V660M589.5 656V660M595.5 656V660M601.5 656V660M606.5 656V660M608.5 656V660M609.5 656V661M612.5 656V660M615.5 656V660M616.5 656V660M621.5 656V660M622.5 656V660M623.5 656V660M627.5 656V660M638.5 656V660M639.5 656V660M648.5 656V660M657.5 656V660M659.5 656V660M661.5 656V660M672.5 656V660M673.5 656V660M674.5 656V660M676.5 656V660M679.5 656V660M681.5 656V660M683.5 656V660M684.5 656V660M685.5 656V661M686.5 656V660M688.5 656V660M689.5 656V660M690.5 656V660M692.5 656V660M693.5 656V660M694.5 656V660M695.5 656V660M696.5 656V661M701.5 656V660M706.5 656V660M707.5 656V660M712.5 656V660M716.5 656V660M722.5 656V660M737.5 656V660M741.5 656V660M744.5 656V660M745.5 655V661M746.5 656V661M748.5 655V660M749.5 656V660M750.5 656V660M751.5 656V661M758.5 656V660M760.5 656V660M763.5 656V660M765.5 656V660M774.5 656V660M778.5 656V660M784.5 656V660M785.5 656V660M786.5 656V660M788.5 656V661M792.5 656V660M795.5 656V660M802.5 656V660M810.5 656V660M812.5 656V660M814.5 656V660M815.5 656V660M816.5 655V660M818.5 656V660M823.5 656V660M827.5 656V661M828.5 656V660M830.5 656V661M833.5 656V660M836.5 655V660M840.5 656V660M842.5 656V660M843.5 656V660M859.5 656V660M862.5 656V660M870.5 656V660M872.5 656V660M882.5 656V660M889.5 656V660M892.5 656V660M895.5 656V660M898.5 655V660M901.5 656V660M903.5 656V660M914.5 656V660M917.5 656V660M922.5 656V660M928.5 656V660M929.5 656V660M931.5 656V660M934.5 655V661M937.5 656V660M938.5 656V660M944.5 656V660M945.5 655V660M949.5 656V661M952.5 656V660M955.5 656V660M957.5 656V660M962.5 656V660M964.5 656V660M966.5 656V660M978.5 656V660M982.5 655V661M986.5 656V660M987.5 656V660M989.5 656V660M990.5 655V660M999.5 656V660M1001.5 656V661M1004.5 656V660M1007.5 655V660M1016.5 656V660M1017.5 656V660M1022.5 656V661M1027.5 656V660M1028.5 656V660M1029.5 656V660M1038.5 655V660M1041.5 655V660M1047.5 656V661M1048.5 655V660M1049.5 656V660M1056.5 656V660M1057.5 656V660M1062.5 656V660M1063.5 655V661M1068.5 656V660M1072.5 656V660M1082.5 656V660M1083.5 656V660M1086.5 656V660M1087.5 656V661M1090.5 656V660M1093.5 656V660M1098.5 656V660M1107.5 656V660M1117.5 656V660M1119.5 656V661M1121.5 656V660M1126.5 656V660M1127.5 656V660M1128.5 656V660M1133.5 656V660M1136.5 656V660M1139.5 656V660M1142.5 656V660M1146.5 656V660M1147.5 656V660M1151.5 656V660M1154.5 656V660M1159.5 656V660M1161.5 656V660M1163.5 656V660M1164.5 656V660M1165.5 656V660M1172.5 655V660M1179.5 656V660M1181.5 656V660M1182.5 656V661M1184.5 656V660M1192.5 656V660M1200.5 656V660M1202.5 656V660M1212.5 656V660M1215.5 655V660M1216.5 656V660M1219.5 656V660M1221.5 656V661M1222.5 656V660M1231.5 656V660M1233.5 656V660M1235.5 656V660M1240.5 656V660M1243.5 656V660M1244.5 656V660M1245.5 656V660M1255.5 656V660M1257.5 656V661M1262.5 656V660M1269.5 656V660M1272.5 656V660M1273.5 656V660M1275.5 656V660M1278.5 656V660M1280.5 656V660M1284.5 656V660M1285.5 656V660M1288.5 656V660M1295.5 656V660M1297.5 656V660M1299.5 656V660M1302.5 656V661M1304.5 656V661M1306.5 656V660M1308.5 656V660M1312.5 656V660M1318.5 655V660M1320.5 656V660M1326.5 656V660M1328.5 656V660M1329.5 655V660M1330.5 655V660M1331.5 656V660M1332.5 656V660M1334.5 656V660M1339.5 655V660M1340.5 656V660M1343.5 656V660M1344.5 656V660M1348.5 656V660M1349.5 656V660M1350.5 656V660M1352.5 656V661M1357.5 656V660M1358.5 656V660M1361.5 656V660M1363.5 656V660M1366.5 656V660M1367.5 656V660M1368.5 656V660M1369.5 656V660M1370.5 655V660M1371.5 656V660M1374.5 656V661M1378.5 384V389M1381.5 384V388M1382.5 384V388M1384.5 384V388M1386.5 384V388M1395.5 384V389M1397.5 384V388M1400.5 384V388M1404.5 384V388M1413.5 384V388M1415.5 383V389M1419.5 384V388M1420.5 384V388M1421.5 384V388M1426.5 384V388M1430.5 383V388M1431.5 384V388M1441.5 384V389M1445.5 384V388M1448.5 384V388M1455.5 384V388M1456.5 384V388M1465.5 655V661M1466.5 656V660M1474.5 656V660M1479.5 656V660M1481.5 656V660M1485.5 656V661M1489.5 656V661M1491.5 656V660M1498.5 656V660M1502.5 656V660M1503.5 656V661M1505.5 656V660M1506.5 656V660M1507.5 656V660M1511.5 656V660M1514.5 656V660M1515.5 656V660M1517.5 656V660M1520.5 656V661M1524.5 656V660M1528.5 656V660M1530.5 655V661M1533.5 656V660M1534.5 656V660M1536.5 656V660M1537.5 656V661M1542.5 656V660M1543.5 656V660M1547.5 656V660M1550.5 656V660M1551.5 656V660M1558.5 656V660M1565.5 656V660M1566.5 656V660M1567.5 656V660M1568.5 656V660M1571.5 656V660M1574.5 656V660M1576.5 656V661M1582.5 656V660M1586.5 656V660M1587.5 656V660M1595.5 656V661M1599.5 656V660M1605.5 656V661M1608.5 656V660M1614.5 656V660M1617.5 656V660M1618.5 655V660M1619.5 656V660M1622.5 656V660M1625.5 656V660M1627.5 656V660M1628.5 656V660M1633.5 656V660M1639.5 656V661M1641.5 656V660M1647.5 655V660M1649.5 655V660M1650.5 656V660M1651.5 656V660M1652.5 656V660M1656.5 656V660M1667.5 656V661M1668.5 656V660M1675.5 656V660M1676.5 656V660M1681.5 656V660M1682.5 656V660M1683.5 656V660M1689.5 656V660M1702.5 656V660M1707.5 656V660"/><path stroke="#22c6cf" stroke-opacity="0.55" d="M313.5 475V660M314.5 383V478M398.5 384V456M399.5 452V592M400.5 588V660M1376.5 566V660M1377.5 384V569M1460.5 384V456M1461.5 452V592M1462.5 588V660"/><path stroke="#e42a52" d="M12.5 830V834M14.5 830V834M15.5 829V833M16.5 829V834M19.5 830V834M20.5 829V833M21.5 829V834M23.5 829V834M24.5 829V834M26.5 829V833M27.5 829V834M30.5 829V834M32.5 829V834M33.5 829V834M34.5 829V833M35.5 829V834M38.5 829V834M39.5 829V833M41.5 829V833M42.5 829V834M43.5 830V833M45.5 830V833M46.5 830V833M47.5 829V833M51.5 829V833M52.5 830V833M53.5 829V833M54.5 830V833M55.5 829V834M56.5 830V833M59.5 830V833M60.5 830V834M61.5 830V834M62.5 829V833M63.5 829V834M65.5 830V833M66.5 829V834M67.5 830V833M69.5 830V834M70.5 830V834M73.5 830V834M75.5 830V833M76.5 829V833M77.5 828V833M78.5 830V834M83.5 829V835M84.5 829V833M85.5 829V835M86.5 829V833M87.5 829V834M88.5 829V834M89.5 829V834M92.5 829V833M93.5 829V834M99.5 829V833M100.5 829V833M101.5 830V834M103.5 830V833M104.5 830V833M105.5 830V834M106.5 829V834M107.5 829V834M108.5 829V834M109.5 830V833M111.5 830V834M112.5 829V834M114.5 830V834M115.5 829V833M116.5 830V834M121.5 828V834M122.5 830V833M123.5 829V833M124.5 830V833M126.5 830V834M127.5 830V833M128.5 830V834M129.5 829V833M131.5 830V833M133.5 830V834M135.5 830V834M136.5 829V833M137.5 829V833M139.5 829V833M140.5 829V834M142.5 830V833M144.5 830V833M147.5 830V834M149.5 829V834M150.5 829V834M153.5 829V833M154.5 830V834M155.5 830V834M156.5 830V834M157.5 830V834M158.5 829V833M160.5 829V833M161.5 829V834M163.5 830V833M164.5 828V835M166.5 830V834M169.5 829V833M171.5 829V834M172.5 829V834M175.5 829V834M176.5 829V835M180.5 830V833M182.5 830V834M184.5 829V834M185.5 830V833M187.5 830V834M189.5 830V834M191.5 830V833M192.5 829V835M193.5 829V833M195.5 829V834M198.5 829V833M199.5 829V834M200.5 830V834M201.5 830V833M202.5 829V835M205.5 830V833M206.5 830V835M207.5 829V834M210.5 830V833M211.5 830V834M212.5 829V834M213.5 829V834M214.5 830V833M216.5 830V835M217.5 829V833M218.5 829V834M219.5 829V833M220.5 830V833M223.5 829V834M224.5 829V834M226.5 828V834M227.5 829V833M228.5 830V834M229.5 830V834M234.5 828V833M236.5 830V833M237.5 829V834M238.5 830V834M239.5 830V834M240.5 829V834M241.5 830V834M242.5 830V834M244.5 829V835M245.5 828V834M248.5 830V834M249.5 830V834M250.5 829V834M251.5 828V834M252.5 830V833M255.5 829V834M256.5 830V834M257.5 829V834M258.5 830V834M259.5 829V833M260.5 829V834M261.5 829V834M264.5 829V833M267.5 830V834M269.5 829V834M271.5 830V833M272.5 829V833M274.5 830V834M275.5 830V833M276.5 829V833M277.5 828V834M279.5 829V833M282.5 829V834M284.5 829V834M286.5 830V834M287.5 829V835M292.5 829V833M296.5 830V834M297.5 830V833M299.5 829V833M300.5 830V834M301.5 829V834M302.5 829V834M303.5 829V833M304.5 830V833M305.5 830V833M306.5 830V835M307.5 829V833M308.5 829V834M311.5 830V834M312.5 829V833M313.5 830V833M318.5 829V834M319.5 829V834M320.5 829V834M321.5 829V833M322.5 828V833M323.5 829V834M324.5 830V833M325.5 830V835M326.5 829V834M328.5 830V834M329.5 830V833M330.5 830V833M331.5 829V834M332.5 829V834M333.5 829V834M334.5 830V834M335.5 829V834M336.5 829V834M339.5 829V834M340.5 829V834M342.5 830V833M343.5 830V834M344.5 830V833M345.5 829V833M346.5 829V833M347.5 830V833M348.5 829V834M350.5 830V834M351.5 829V834M352.5 830V834M353.5 829V834M354.5 829V835M356.5 830V833M358.5 829V833M362.5 829V833M363.5 829V834M364.5 829V833M366.5 829V833M367.5 830V835M369.5 829V834M371.5 830V835M373.5 830V833M374.5 829V834M375.5 829V833M378.5 829V834M379.5 829V834M380.5 829V834M382.5 829V834M384.5 829V833M385.5 830V834M387.5 829V833M390.5 829V834M391.5 828V833M393.5 830V834M394.5 829V834M400.5 829V834M401.5 830V834M402.5 829V833M406.5 830V833M407.5 830V834M409.5 829V834M410.5 829V834M412.5 829V833M413.5 830V833M414.5 830V834M417.5 830V834M418.5 829V833M419.5 828V834M420.5 830V835M423.5 830V834M425.5 830V834M426.5 829V834M427.5 830V833M428.5 829V833M430.5 829V834M434.5 829V833M435.5 829V833M436.5 829V833M437.5 829V835M438.5 828V833M439.5 830V833M440.5 829V834M441.5 829V833M442.5 829V833M443.5 830V834M444.5 830V833M449.5 829V833M450.5 829V834M451.5 829V834M455.5 829V834M458.5 828V834M459.5 830V833M461.5 828V834M462.5 828V834M463.5 829V834M466.5 829V834M467.5 830V833M469.5 829V833M470.5 829V834M471.5 829V833M472.5 829V834M473.5 829V833M474.5 828V833M475.5 829V834M477.5 829V834M478.5 829V834M481.5 830V834M482.5 830V833M484.5 829V833M487.5 829V833M488.5 830V834M490.5 829V833M492.5 829V834M493.5 829V834M494.5 829V834M496.5 829V833M497.5 829V833M498.5 830V835M499.5 829V833M500.5 829V833M501.5 830V834M506.5 830V833M508.5 829V835M510.5 829V834M511.5 830V834M512.5 830V833M514.5 829V833M515.5 829V833M516.5 829V833M517.5 829V834M518.5 830V833M520.5 829V833M522.5 830V833M523.5 829V833M525.5 830V834M526.5 829V833M527.5 829V834M529.5 828V833M530.5 830V833M531.5 828V834M534.5 829V834M535.5 829V833M536.5 829V835M537.5 829V833M538.5 829V834M539.5 830V833M540.5 830V833M541.5 829V834M542.5 829V833M544.5 830V833M547.5 829V833M549.5 830V834M550.5 829V834M551.5 830V833M553.5 829V834M554.5 830V833M555.5 830V833M556.5 830V834M559.5 829V834M561.5 828V834M564.5 829V833M566.5 830V833M568.5 829V834M569.5 830V833M570.5 829V833M572.5 828V834M573.5 829V834M574.5 830V833M575.5 829V834M576.5 829V834M577.5 828V834M578.5 829V833M579.5 829V833M580.5 830V834M582.5 828V834M583.5 829V834M584.5 829V834M585.5 830V834M589.5 830V833M590.5 829V834M592.5 829V833M593.5 830V833M594.5 829V834M596.5 830V835M598.5 829V834M600.5 830V833M601.5 829V833M604.5 829V833M605.5 829V834M606.5 828V833M610.5 828V834M612.5 829V834M616.5 829V833M617.5 829V833M618.5 829V834M619.5 830V835M622.5 829V835M623.5 830V834M625.5 829V833M627.5 830V834M629.5 830V834M632.5 829V834M634.5 829V833M635.5 830V834M637.5 830V834M638.5 830V834M639.5 829V835M640.5 829V834M641.5 830V833M642.5 830V834M645.5 830V834M646.5 829V833M648.5 829V834M651.5 829V834M656.5 830V834M657.5 830V834M658.5 829V834M660.5 830V834M662.5 829V833M663.5 829V834M665.5 830V834M668.5 829V834M669.5 829V834M670.5 829V833M671.5 830V833M672.5 830V833M673.5 829V833M674.5 829V833M676.5 829V833M677.5 830V834M678.5 829V833M679.5 829V833M680.5 830V834M681.5 829V834M682.5 829V834M683.5 830V833M685.5 829V834M686.5 830V834M688.5 829V833M689.5 829V833M690.5 829V833M691.5 830V834M692.5 829V834M693.5 829V833M696.5 829V833M697.5 829V834M700.5 830V833M701.5 829V834M702.5 829V833M703.5 829V834M705.5 829V834M706.5 829V833M709.5 829V835M710.5 829V834M711.5 829V834M712.5 830V834M713.5 828V834M714.5 830V833M715.5 829V833M716.5 830V833M718.5 828V833M719.5 828V834M721.5 830V834M722.5 829V833M725.5 829V833M726.5 829V834M727.5 829V834M728.5 830V834M730.5 830V835M731.5 829V833M732.5 829V834M733.5 829V833M735.5 829V834M736.5 829V834M739.5 829V834M740.5 829V834M742.5 829V834M744.5 830V834M745.5 829V834M746.5 829V833M747.5 829V833M748.5 829V833M749.5 829V833M750.5 829V834M753.5 830V834M754.5 829V834M756.5 828V834M759.5 830V833M760.5 829V833M762.5 829V834M763.5 830V833M764.5 829V833M767.5 829V834M771.5 829V833M772.5 830V833M774.5 829V833M775.5 830V833M776.5 829V834M777.5 830V834M778.5 830V833M780.5 829V834M781.5 829V834M783.5 829V834M785.5 829V834M787.5 829V833M788.5 830V834M789.5 829V834M790.5 829V834M793.5 829V834M796.5 830V834M797.5 830V833M798.5 829V834M803.5 829V834M804.5 830V833M805.5 829V834M806.5 830V833M807.5 829V834M808.5 830V834M809.5 829V834M811.5 830V834M812.5 830V833M814.5 829V833M816.5 829V833M817.5 829V833M818.5 829V834M819.5 829V834M820.5 829V834M822.5 830V834M825.5 830V833M827.5 830V834M828.5 830V834M829.5 829V833M830.5 829V834M832.5 829V834M834.5 830V834M836.5 829V833M837.5 828V833M838.5 830V833M840.5 830V834M841.5 829V833M844.5 829V834M846.5 830V834M849.5 829V834M850.5 829V833M851.5 830V834M852.5 830V834M855.5 829V835M858.5 829V834M859.5 829V834M860.5 830V834M863.5 829V834M864.5 829V834M865.5 829V834M866.5 829V834M867.5 830V834M869.5 828V834M870.5 829V833M871.5 830V833M872.5 829V833M874.5 829V834M875.5 829V833M876.5 828V834M877.5 829V834M878.5 829V834M880.5 830V834M881.5 830V834M882.5 829V834M884.5 830V834M885.5 830V833M886.5 830V833M887.5 830V833M888.5 830V833M891.5 830V834M892.5 829V833M893.5 829V834M894.5 830V834M895.5 830V834M896.5 830V833M898.5 830V833M900.5 830V833M901.5 829V833M904.5 830V834M909.5 829V833M910.5 830V834M913.5 829V833M914.5 830V833M915.5 829V835M916.5 829V834M918.5 828V833M919.5 830V833M920.5 830V834M921.5 828V834M922.5 830V834M923.5 830V833M924.5 829V834M925.5 829V834M928.5 829V833M931.5 830V833M933.5 829V834M935.5 830V834M936.5 829V834M937.5 830V834M940.5 829V834M941.5 829V834M942.5 829V833M943.5 829V834M944.5 830V834M945.5 829V833M947.5 830V833M949.5 829V834M951.5 829V833M952.5 829V834M953.5 830V835M954.5 829V834M955.5 829V833M956.5 830V833M957.5 829V833M959.5 829V834M961.5 829V833M964.5 830V834M965.5 830V834M966.5 829V833M967.5 830V834M969.5 829V834M970.5 829V834M972.5 829V834M974.5 830V834M975.5 829V834M976.5 829V834M977.5 829V833M978.5 830V834M981.5 829V833M982.5 829V834M983.5 830V834M984.5 830V834M985.5 829V834M987.5 829V833M988.5 829V834M989.5 830V833M990.5 829V834M992.5 830V834M993.5 830V834M994.5 830V833M995.5 830V833M997.5 830V833M1000.5 829V833M1003.5 829V834M1006.5 829V833M1007.5 830V834M1008.5 830V833M1009.5 830V834M1011.5 829V834M1012.5 830V834M1017.5 829V833M1019.5 829V834M1021.5 829V834M1022.5 829V833M1026.5 830V834M1027.5 830V834M1028.5 828V833M1030.5 829V835M1033.5 830V833M1034.5 829V834M1037.5 829V834M1039.5 830V833M1041.5 829V833M1042.5 829V833M1043.5 828V834M1045.5 829V833M1046.5 829V835M1047.5 829V833M1048.5 829V833M1049.5 829V833M1050.5 829V833M1052.5 830V833M1053.5 829V833M1054.5 828V834M1055.5 829V833M1056.5 829V834M1057.5 830V834M1058.5 829V833M1062.5 830V834M1063.5 830V834M1064.5 829V834M1065.5 829V834M1066.5 830V833M1067.5 829V834M1069.5 829V835M1071.5 829V834M1072.5 829V834M1073.5 829V833M1074.5 830V834M1076.5 830V833M1077.5 829V833M1079.5 829V835M1082.5 830V833M1083.5 829V833M1085.5 828V834M1086.5 829V833M1087.5 829V834M1091.5 830V835M1093.5 830V834M1094.5 829V834M1096.5 829V834M1098.5 829V834M1101.5 829V833M1102.5 829V834M1104.5 830V834M1105.5 830V833M1106.5 829V833M1107.5 829V834M1108.5 829V834M1109.5 829V833M1113.5 829V834M1114.5 830V833M1115.5 829V834M1119.5 830V834M1120.5 828V834M1121.5 830V834M1122.5 829V833M1124.5 830V834M1125.5 830V834M1126.5 830V834M1127.5 830V834M1128.5 830V834M1129.5 829V834M1130.5 829V833M1133.5 829V833M1134.5 830V833M1136.5 829V833M1137.5 829V834M1138.5 830V834M1139.5 829V833M1140.5 830V833M1141.5 829V833M1143.5 829V834M1146.5 829V833M1147.5 830V834M1149.5 830V834M1150.5 829V834M1153.5 829V834M1154.5 830V833M1159.5 829V834M1161.5 830V833M1162.5 829V835M1164.5 830V833M1165.5 830V834M1168.5 829V833M1170.5 829V834M1171.5 829V833M1172.5 830V834M1177.5 829V834M1182.5 829V833M1185.5 830V835M1186.5 830V834M1189.5 829V834M1191.5 829V833M1192.5 829V834M1195.5 829V834M1197.5 829V834M1198.5 830V834M1199.5 829V834M1200.5 830V835M1201.5 830V834M1202.5 830V834M1203.5 830V833M1205.5 829V834M1207.5 829V833M1208.5 830V834M1209.5 829V833M1210.5 829V834M1211.5 829V834M1215.5 830V833M1217.5 830V835M1221.5 829V834M1223.5 829V833M1224.5 829V834M1225.5 829V833M1226.5 830V834M1227.5 829V833M1228.5 829V834M1229.5 830V833M1230.5 830V834M1231.5 829V834M1232.5 829V834M1234.5 829V834M1236.5 830V833M1237.5 829V834M1238.5 830V834M1239.5 829V833M1240.5 830V834M1244.5 830V834M1245.5 829V834M1247.5 830V835M1248.5 829V833M1250.5 830V833M1251.5 829V833M1252.5 830V834M1253.5 829V833M1255.5 829V834M1256.5 829V834M1257.5 829V834M1258.5 830V833M1259.5 830V833M1260.5 829V834M1262.5 829V833M1263.5 829V834M1264.5 829V833M1266.5 829V833M1267.5 829V833M1268.5 830V834M1269.5 830V834M1270.5 830V833M1271.5 829V834M1272.5 830V834M1273.5 830V834M1275.5 830V833M1277.5 829V834M1279.5 829V833M1280.5 829V833M1281.5 829V833M1284.5 829V833M1285.5 829V834M1286.5 829V834M1288.5 829V834M1289.5 829V834M1291.5 829V833M1293.5 829V834M1297.5 829V834M1298.5 829V834M1299.5 830V833M1300.5 829V834M1301.5 830V833M1303.5 830V833M1304.5 830V833M1306.5 829V833M1307.5 830V834M1308.5 830V833M1312.5 830V833M1313.5 829V833M1315.5 830V833M1317.5 829V833M1318.5 829V834M1319.5 830V833M1320.5 829V834M1321.5 829V833M1322.5 829V834M1324.5 829V834M1325.5 829V833M1326.5 829V833M1327.5 829V834M1328.5 830V833M1331.5 830V834M1332.5 829V833M1333.5 829V834M1334.5 830V833M1335.5 829V833M1336.5 830V833M1337.5 829V834M1338.5 830V834M1339.5 829V833M1341.5 829V833M1342.5 829V833M1346.5 830V833M1347.5 830V833M1348.5 830V834M1351.5 830V833M1352.5 829V834M1353.5 830V834M1354.5 829V833M1355.5 829V834M1357.5 830V834M1358.5 829V833M1359.5 830V833M1360.5 829V834M1361.5 830V834M1365.5 829V834M1367.5 830V834M1368.5 830V834M1369.5 830V833M1370.5 829V834M1371.5 830V834M1375.5 830V834M1376.5 830V834M1377.5 830V834M1378.5 829V835M1380.5 830V834M1382.5 831V835M1383.5 830V835M1385.5 830V835M1386.5 830V834M1387.5 830V834M1390.5 831V834M1391.5 831V834M1392.5 830V834M1395.5 830V834M1397.5 831V835M1398.5 830V834M1402.5 830V834M1404.5 829V834M1405.5 830V835M1406.5 830V835M1409.5 830V835M1411.5 830V834M1413.5 830V835M1415.5 830V835M1416.5 830V834M1417.5 830V834M1418.5 830V834M1420.5 830V834M1421.5 830V834M1423.5 830V835M1424.5 831V835M1426.5 830V835M1428.5 831V834M1429.5 830V835M1431.5 830V834M1434.5 830V835M1436.5 830V834M1437.5 830V835M1438.5 830V834M1440.5 830V834M1441.5 829V834M1443.5 830V836M1445.5 830V834M1446.5 830V834M1447.5 830V834M1449.5 830V834M1451.5 829V834M1454.5 830V834M1455.5 830V835M1457.5 829V835M1458.5 829V834M1461.5 830V833M1462.5 830V833M1463.5 829V834M1464.5 829V833M1468.5 829V833M1469.5 829V834M1471.5 829V834M1472.5 830V834M1473.5 830V834M1474.5 830V834M1476.5 830V834M1477.5 829V833M1478.5 828V834M1479.5 830V833M1481.5 830V833M1482.5 829V834M1483.5 830V833M1484.5 828V833M1487.5 829V834M1488.5 829V834M1490.5 829V834M1491.5 830V834M1494.5 829V834M1496.5 829V833M1497.5 830V833M1499.5 829V834M1500.5 829V834M1501.5 829V834M1502.5 830V834M1504.5 829V833M1506.5 830V833M1508.5 829V833M1509.5 830V833M1510.5 829V834M1511.5 830V833M1514.5 829V834M1515.5 830V834M1516.5 829V835M1519.5 829V833M1520.5 829V834M1521.5 829V833M1524.5 829V834M1525.5 830V833M1531.5 830V833M1532.5 830V833M1533.5 830V834M1534.5 830V833M1535.5 829V834M1536.5 829V834M1537.5 829V833M1540.5 830V833M1541.5 829V834M1542.5 829V834M1544.5 829V833M1545.5 830V834M1548.5 828V834M1550.5 829V834M1551.5 829V834M1552.5 830V833M1556.5 830V834M1557.5 830V834M1559.5 829V834M1560.5 829V833M1561.5 830V833M1562.5 830V835M1563.5 829V833M1564.5 829V833M1565.5 830V834M1566.5 829V833M1567.5 830V835M1568.5 829V834M1571.5 830V834M1573.5 829V833M1574.5 830V834M1576.5 829V834M1577.5 829V833M1581.5 829V834M1582.5 830V834M1583.5 830V833M1585.5 830V834M1587.5 829V834M1588.5 830V833M1592.5 830V834M1593.5 829V833M1594.5 829V834M1595.5 830V834M1596.5 830V834M1598.5 829V834M1599.5 830V834M1600.5 829V834M1604.5 829V833M1606.5 830V833M1607.5 830V833M1608.5 830V834M1609.5 830V834M1610.5 829V833M1613.5 829V834M1614.5 829V833M1616.5 830V834M1617.5 829V834M1618.5 829V833M1619.5 829V834M1620.5 830V834M1621.5 829V834M1622.5 829V834M1623.5 829V833M1625.5 829V833M1626.5 829V833M1628.5 829V833M1629.5 830V834M1630.5 829V834M1632.5 830V834M1633.5 830V834M1634.5 829V834M1636.5 830V833M1637.5 829V833M1638.5 829V834M1641.5 830V835M1644.5 830V834M1645.5 829V835M1646.5 829V833M1647.5 829V834M1649.5 829V834M1650.5 830V834M1652.5 830V834M1655.5 830V834M1656.5 829V834M1657.5 829V833M1660.5 830V833M1662.5 830V833M1663.5 829V833M1665.5 829V833M1666.5 830V834M1667.5 828V833M1668.5 830V834M1669.5 829V834M1670.5 830V834M1671.5 829V833M1673.5 829V834M1675.5 829V834M1676.5 830V834M1677.5 829V833M1680.5 829V834M1681.5 829V835M1682.5 830V833M1684.5 829V833M1685.5 829V835M1687.5 830V833M1688.5 829V834M1689.5 830V833M1690.5 830V833M1691.5 829V834M1692.5 829V834M1695.5 828V834M1697.5 830V833M1698.5 829V834M1701.5 830V833M1702.5 829V834M1705.5 829V834M1707.5 829V834M1708.5 830V834M1709.5 829V833M1711.5 830V834"/><path stroke="#b82244" d="M13.5 830V835M17.5 830V834M18.5 830V834M22.5 830V834M25.5 829V834M28.5 828V833M29.5 830V834M31.5 829V834M36.5 828V834M37.5 829V834M40.5 829V834M44.5 829V834M48.5 829V833M49.5 830V833M50.5 829V834M57.5 829V833M58.5 830V834M64.5 830V834M68.5 829V834M71.5 830V834M72.5 829V833M74.5 830V833M79.5 829V834M80.5 829V834M81.5 829V834M82.5 830V833M90.5 829V834M91.5 830V834M94.5 830V833M95.5 829V833M96.5 828V834M97.5 829V834M98.5 829V834M102.5 829V833M110.5 830V833M113.5 829V834M117.5 829V834M118.5 830V834M119.5 829V833M120.5 830V834M125.5 829V834M130.5 830V834M132.5 829V834M134.5 830V834M138.5 829V834M141.5 829V833M143.5 830V833M145.5 829V834M146.5 830V834M148.5 829V834M151.5 830V834M152.5 829V833M159.5 829V833M162.5 829V834M165.5 830V833M167.5 830V833M168.5 829V834M170.5 830V833M173.5 829V834M174.5 829V834M177.5 829V834M178.5 829V834M179.5 829V834M181.5 829V834M183.5 829V833M186.5 830V834M188.5 829V833M190.5 830V833M194.5 830V834M196.5 830V835M197.5 830V834M203.5 829V834M204.5 829V833M208.5 829V834M209.5 829V834M215.5 830V833M221.5 830V834M222.5 830V834M225.5 830V834M230.5 829V834M231.5 830V834M232.5 830V834M233.5 829V834M235.5 829V833M243.5 829V834M246.5 829V834M247.5 830V834M253.5 829V833M254.5 829V834M262.5 830V834M263.5 829V834M265.5 828V834M266.5 830V835M268.5 829V834M270.5 829V834M273.5 830V835M278.5 830V833M280.5 829V834M281.5 830V834M283.5 829V833M285.5 830V834M288.5 830V834M289.5 830V834M290.5 829V834M291.5 830V834M293.5 829V834M294.5 829V833M295.5 830V833M298.5 829V833M309.5 829V834M310.5 828V833M314.5 829V833M315.5 829V834M316.5 829V833M317.5 829V833M327.5 830V835M337.5 829V834M338.5 829V833M341.5 830V833M349.5 829V834M355.5 829V834M357.5 830V834M359.5 830V834M360.5 830V834M361.5 829V834M365.5 830V834M368.5 830V833M370.5 829V834M372.5 829V834M376.5 830V834M377.5 830V833M381.5 829V833M383.5 829V834M386.5 829V834M388.5 829V833M389.5 829V833M392.5 829V834M395.5 828V833M396.5 829V833M397.5 830V834M398.5 829V833M399.5 829V834M403.5 830V833M404.5 830V834M405.5 829V833M408.5 829V834M411.5 829V833M415.5 829V834M416.5 829V833M421.5 829V833M422.5 830V833M424.5 829V834M429.5 830V833M431.5 829V834M432.5 830V834M433.5 829V834M445.5 830V834M446.5 830V834M447.5 830V835M448.5 829V834M452.5 830V834M453.5 830V834M454.5 829V833M456.5 830V834M457.5 830V834M460.5 828V833M464.5 830V834M465.5 830V835M468.5 830V833M476.5 829V834M479.5 829V835M480.5 829V833M483.5 829V834M485.5 830V833M486.5 830V835M489.5 828V835M491.5 830V833M495.5 829V834M502.5 829V834M503.5 829V834M504.5 829V834M505.5 829V834M507.5 829V834M509.5 829V834M513.5 829V833M519.5 830V833M521.5 829V834M524.5 830V834M528.5 828V833M532.5 830V834M533.5 830V833M543.5 829V834M545.5 829V834M546.5 828V834M548.5 830V834M552.5 828V834M557.5 830V835M558.5 829V833M560.5 830V834M562.5 829V834M563.5 830V833M565.5 830V833M567.5 830V833M571.5 830V834M581.5 830V834M586.5 829V834M587.5 829V833M588.5 830V834M591.5 830V833M595.5 830V834M597.5 829V834M599.5 829V833M602.5 829V834M603.5 829V834M607.5 830V833M608.5 829V834M609.5 830V833M611.5 830V833M613.5 830V833M614.5 829V834M615.5 830V834M620.5 829V833M621.5 830V834M624.5 829V834M626.5 830V834M628.5 829V834M630.5 830V833M631.5 829V834M633.5 830V834M636.5 830V834M643.5 830V834M644.5 829V834M647.5 830V834M649.5 829V834M650.5 830V833M652.5 829V833M653.5 828V834M654.5 830V834M655.5 829V833M659.5 830V834M661.5 830V834M664.5 829V833M666.5 830V834M667.5 830V833M675.5 829V834M684.5 829V833M687.5 829V834M694.5 829V834M695.5 829V833M698.5 829V834M699.5 829V833M704.5 829V833M707.5 830V833M708.5 829V835M717.5 829V834M720.5 830V834M723.5 829V833M724.5 829V834M729.5 830V835M734.5 829V834M737.5 830V833M738.5 829V834M741.5 830V834M743.5 830V833M751.5 829V833M752.5 829V833M755.5 829V834M757.5 829V834M758.5 830V834M761.5 830V833M765.5 830V833M766.5 830V834M768.5 830V834M769.5 829V834M770.5 829V834M773.5 830V834M779.5 829V834M782.5 829V834M784.5 830V834M786.5 830V833M791.5 828V834M792.5 829V833M794.5 830V834M795.5 830V833M799.5 830V833M800.5 830V834M801.5 829V834M802.5 830V834M810.5 829V833M813.5 830V835M815.5 829V835M821.5 829V833M823.5 829V834M824.5 829V834M826.5 829V833M831.5 830V833M833.5 829V834M835.5 829V833M839.5 829V833M842.5 828V834M843.5 829V834M845.5 830V834M847.5 830V834M848.5 830V833M853.5 829V835M854.5 829V834M856.5 829V834M857.5 828V834M861.5 829V834M862.5 829V833M868.5 830V834M873.5 828V834M879.5 830V834M883.5 829V833M889.5 829V834M890.5 830V834M897.5 829V834M899.5 829V833M902.5 829V834M903.5 829V834M905.5 829V833M906.5 829V833M907.5 830V833M908.5 830V835M911.5 830V833M912.5 829V833M917.5 830V834M926.5 830V835M927.5 830V833M929.5 828V834M930.5 830V834M932.5 830V833M934.5 830V833M938.5 829V833M939.5 830V834M946.5 829V834M948.5 828V834M950.5 829V833M958.5 829V833M960.5 829V833M962.5 830V834M963.5 830V833M968.5 830V834M971.5 830V834M973.5 829V834M979.5 829V834M980.5 829V834M986.5 829V833M991.5 830V833M996.5 829V833M998.5 830V833M999.5 830V833M1001.5 830V834M1002.5 830V834M1004.5 829V834M1005.5 830V834M1010.5 830V834M1013.5 829V833M1014.5 829V834M1015.5 829V833M1016.5 829V834M1018.5 830V833M1020.5 830V834M1023.5 829V834M1024.5 830V834M1025.5 829V834M1029.5 829V834M1031.5 829V834M1032.5 829V834M1035.5 829V834M1036.5 829V833M1038.5 829V834M1040.5 830V834M1044.5 830V833M1051.5 829V833M1059.5 830V834M1060.5 829V833M1061.5 829V834M1068.5 829V833M1070.5 830V833M1075.5 829V834M1078.5 830V833M1080.5 829V833M1081.5 830V834M1084.5 828V834M1088.5 829V833M1089.5 830V834M1090.5 830V833M1092.5 829V834M1095.5 829V833M1097.5 830V833M1099.5 830V834M1100.5 830V834M1103.5 830V834M1110.5 829V833M1111.5 830V834M1112.5 829V835M1116.5 829V833M1117.5 830V833M1118.5 830V833M1123.5 828V834M1131.5 830V834M1132.5 829V834M1135.5 830V834M1142.5 829V833M1144.5 829V833M1145.5 830V833M1148.5 830V833M1151.5 830V833M1152.5 830V834M1155.5 829V834M1156.5 829V833M1157.5 829V834M1158.5 829V834M1160.5 828V833M1163.5 830V834M1166.5 830V833M1167.5 829V834M1169.5 829V833M1173.5 830V833M1174.5 830V834M1175.5 829V834M1176.5 829V833M1178.5 829V833M1179.5 830V833M1180.5 829V834M1181.5 830V833M1183.5 829V833M1184.5 829V834M1187.5 829V835M1188.5 830V834M1190.5 829V834M1193.5 829V834M1194.5 829V834M1196.5 830V833M1204.5 830V834M1206.5 829V833M1212.5 830V834M1213.5 830V834M1214.5 829V833M1216.5 830V835M1218.5 829V833M1219.5 829V833M1220.5 829V833M1222.5 829V834M1233.5 829V833M1235.5 830V833M1241.5 829V834M1242.5 829V833M1243.5 829V834M1246.5 830V833M1249.5 830V833M1254.5 829V834M1261.5 828V834M1265.5 830V834M1274.5 829V834M1276.5 830V835M1278.5 829V834M1282.5 830V834M1283.5 829V834M1287.5 830V834M1290.5 829V834M1292.5 829V833M1294.5 830V834M1295.5 829V833M1296.5 828V834M1302.5 829V834M1305.5 829V834M1309.5 829V834M1310.5 828V834M1311.5 829V833M1314.5 830V834M1316.5 829V833M1323.5 829V833M1329.5 829V833M1330.5 829V834M1340.5 829V834M1343.5 829V833M1344.5 829V834M1345.5 829V834M1349.5 828V834M1350.5 830V833M1356.5 830V834M1362.5 829V834M1363.5 829V834M1364.5 830V834M1366.5 829V833M1372.5 829V834M1373.5 830V833M1374.5 829V834M1379.5 831V834M1381.5 830V835M1384.5 830V834M1388.5 830V834M1389.5 830V834M1393.5 830V834M1394.5 830V835M1396.5 830V835M1399.5 830V834M1400.5 830V834M1401.5 830V835M1403.5 830V834M1407.5 829V835M1408.5 830V834M1410.5 830V835M1412.5 830V834M1414.5 830V834M1419.5 830V834M1422.5 830V834M1425.5 830V834M1427.5 830V834M1430.5 830V834M1432.5 830V835M1433.5 830V834M1435.5 830V835M1439.5 830V834M1442.5 830V834M1444.5 831V834M1448.5 831V834M1450.5 830V834M1452.5 830V835M1453.5 830V834M1456.5 830V835M1459.5 830V833M1460.5 829V834M1465.5 829V835M1466.5 829V834M1467.5 829V833M1470.5 829V834M1475.5 829V833M1480.5 829V834M1485.5 829V834M1486.5 829V833M1489.5 830V833M1492.5 830V834M1493.5 829V833M1495.5 830V833M1498.5 829V834M1503.5 829V833M1505.5 830V834M1507.5 830V834M1512.5 830V833M1513.5 830V834M1517.5 829V833M1518.5 830V834M1522.5 830V833M1523.5 829V834M1526.5 830V834M1527.5 829V833M1528.5 829V834M1529.5 829V833M1530.5 829V834M1538.5 829V833M1539.5 830V833M1543.5 830V833M1546.5 830V834M1547.5 830V833M1549.5 830V834M1553.5 830V833M1554.5 829V834M1555.5 829V834M1558.5 829V833M1569.5 830V834M1570.5 829V834M1572.5 829V833M1575.5 829V834M1578.5 830V834M1579.5 829V834M1580.5 830V834M1584.5 830V833M1586.5 830V834M1589.5 830V834M1590.5 829V834M1591.5 828V834M1597.5 829V833M1601.5 829V834M1602.5 829V834M1603.5 829V833M1605.5 829V834M1611.5 829V833M1612.5 830V834M1615.5 830V834M1624.5 830V834M1627.5 829V833M1631.5 829V834M1635.5 830V833M1639.5 830V834M1640.5 830V833M1642.5 829V834M1643.5 830V833M1648.5 829V834M1651.5 830V834M1653.5 829V834M1654.5 829V834M1658.5 829V834M1659.5 830V833M1661.5 830V834M1664.5 829V834M1672.5 829V834M1674.5 829V834M1678.5 830V833M1679.5 829V833M1683.5 829V834M1686.5 830V834M1693.5 829V834M1694.5 830V834M1696.5 829V834M1699.5 829V834M1700.5 830V833M1703.5 828V834M1704.5 829V834M1706.5 829V835M1710.5 829V834"/></g><path d="M1711.5 63V982" stroke="#f39325" stroke-width="1.4" stroke-dasharray="5 5"/><path d="M1690.5 202.5L1703 192.5V201H1712V204H1703V212.5Z" fill="#f8ec2c"/><path d="M1671 69H1702Q1705 69 1705 72V103Z" fill="#555"/><circle cx="1696" cy="75.5" r="4" fill="none" stroke="#aaa" stroke-width="1.6"/><path d="M1693 79L1688 84" stroke="#aaa" stroke-width="2" stroke-linecap="round"/><path d="M1447 63H1467L1457 72.5Z" fill="#f39325"/><path d="M1448 74H1466V93H1461L1457 100L1453 93H1448Z" fill="#000" stroke="#f39325" stroke-width="2"/><path d="M1452.5 79H1461.5M1457 79V89" stroke="#f39325" stroke-width="2.1"/><path d="M763.5 812V820M763.5 825V833M763.5 836V844M747 828.5H755M760 828.5H767M771 828.5H779" stroke="#f39325" stroke-width="1.2"/></svg>
<span class="vl" style="left:1648px;top:137px"><i style="font-style:normal;background:#000;padding-left:1px;display:inline-block;height:10px;vertical-align:top">12.5 V</i></span><span class="vl" style="left:1648px;top:229px"><i style="font-style:normal;background:#000;padding-left:1px;display:inline-block;height:10px;vertical-align:top">12 V</i></span><span class="vl" style="left:1648px;top:321px"><i style="font-style:normal;background:#000;padding-left:1px;display:inline-block;height:10px;vertical-align:top">11.5 V</i></span><span class="vl" style="left:1648px;top:413px"><i style="font-style:normal;background:#000;padding-left:1px;display:inline-block;height:10px;vertical-align:top">11 V</i></span><span class="vl" style="left:1648px;top:505px"><i style="font-style:normal;background:#000;padding-left:1px;display:inline-block;height:10px;vertical-align:top">10.5 V</i></span><span class="vl" style="left:1648px;top:597px"><i style="font-style:normal;background:#000;padding-left:1px;display:inline-block;height:10px;vertical-align:top">10 V</i></span><span class="vl" style="left:1648px;top:689px"><i style="font-style:normal;background:#000;padding-left:1px;display:inline-block;height:10px;vertical-align:top">9.5 V</i></span><span class="vl" style="left:1648px;top:781px"><i style="font-style:normal;background:#000;padding-left:1px;display:inline-block;height:10px;vertical-align:top">9 V</i></span><span class="vl" style="left:1648px;top:873px"><i style="font-style:normal;background:#000;padding-left:1px;display:inline-block;height:10px;vertical-align:top">8.5 V</i></span><span class="vl" style="left:1648px;top:965px"><i style="font-style:normal;background:#000;padding-left:1px;display:inline-block;height:10px;vertical-align:top">8 V</i></span><span class="tl" style="left:57px;top:965px">-16 ms</span><span class="tl" style="left:227px;top:965px">-14 ms</span><span class="tl" style="left:397px;top:965px">-12 ms</span><span class="tl" style="left:567px;top:965px">-10 ms</span><span class="tl" style="left:737px;top:965px">-8 ms</span><span class="tl" style="left:907px;top:965px">-6 ms</span><span class="tl" style="left:1077px;top:965px">-4 ms</span><span class="tl" style="left:1247px;top:965px">-2 ms</span><span class="tl" style="left:1417px;top:965px">0 s</span><span class="tl" style="left:1587px;top:965px">2 ms</span><div class="a" style="left:16px;top:138.5px;width:30px;height:20px;border-radius:5px;background:#383838"></div><div class="a" style="left:18px;top:139.5px;width:18px;height:18px;border-radius:50%;background:#2a86d2;color:#f4f4f4;font-size:14px;line-height:18px;text-align:center">A</div><div class="a" style="left:40px;top:138.5px;width:26px;height:20px;border-radius:5px;background:#d8d23a;color:#222;font-size:14px;line-height:16.5px;text-align:center;letter-spacing:-0.3px">C1</div><div class="a" style="left:16px;top:242.5px;width:30px;height:20px;border-radius:5px;background:#383838"></div><div class="a" style="left:18px;top:243.5px;width:18px;height:18px;border-radius:50%;background:#2a86d2;color:#f4f4f4;font-size:14px;line-height:18px;text-align:center">B</div><div class="a" style="left:40px;top:242.5px;width:26px;height:20px;border-radius:5px;background:#d8d23a;color:#222;font-size:14px;line-height:16.5px;text-align:center;letter-spacing:-0.3px">C1</div><svg class="a" style="left:0;top:0" width="120" height="1000"><path d="M19.5 591.0H38.0L50.0 603.0L38.0 615.0H19.5Q16.5 615.0 16.5 612.0V594.0Q16.5 591.0 19.5 591.0Z" fill="#f8ec38" stroke="#f8ec38" stroke-width="1.25"/><path d="M18.8 879.8H38.8L50.8 892.2L38.8 904.8H18.8Q15.8 904.8 15.8 901.8V882.8Q15.8 879.8 18.8 879.8Z" fill="#071618" stroke="#24c4cc" stroke-width="1.25"/><path d="M18.8 908.8H38.8L50.8 921.2L38.8 933.8H18.8Q15.8 933.8 15.8 930.8V911.8Q15.8 908.8 18.8 908.8Z" fill="#1c0a0e" stroke="#e8445e" stroke-width="1.25"/></svg><span class="t" style="left:24px;top:596px;font-size:13px;color:#111;letter-spacing:2px">C1</span><span class="t" style="left:23px;top:885px;font-size:13px;color:#2ccad2;letter-spacing:2px">C2</span><span class="t" style="left:23px;top:914px;font-size:13px;color:#f4f4f4;letter-spacing:2px">C3</span><span class="t" style="left:62px;top:592px;font-size:19px;color:#f2e63e">12V</span><span class="t" style="left:62px;top:881px;font-size:19px;color:#26c8d2">12A</span><span class="t" style="left:62px;top:911px;font-size:19px;color:#ec4862;letter-spacing:-1.2px">PG</span>
<span class="t" style="left:1782px;top:38px;font-size:15px;font-weight:bold;color:#eaeaea">Add New...</span><div class="btn" style="left:1740px;top:60px;padding-top:12px">Cursors</div><div class="btn" style="left:1826px;top:60px;padding-top:12px">Callout</div><div class="btn" style="left:1740px;top:115px;padding-top:12px">Measure</div><div class="btn" style="left:1826px;top:115px;padding-top:12px">Search</div><div class="btn" style="left:1740px;top:169px;padding-top:4.5px;line-height:16px">Results<br>Table</div><div class="btn" style="left:1826px;top:169px;padding-top:12px">Plot</div><div class="btn" style="left:1740px;top:228px"></div><div class="btn" style="left:1826px;top:228px;padding-top:12px">More...</div><svg class="a" style="left:1760px;top:232px" width="40" height="36"><g fill="#c2c2c2"><rect x="6.3" y="6.0" width="3.0" height="2.8"/><rect x="12.2" y="6.0" width="4.3" height="2.8"/><rect x="19.4" y="6.0" width="4.3" height="2.8"/><rect x="26.3" y="6.0" width="3.5" height="2.8"/><rect x="6.3" y="23.9" width="3.0" height="2.8"/><rect x="12.2" y="23.9" width="4.3" height="2.8"/><rect x="19.4" y="23.9" width="4.3" height="2.8"/><rect x="6.3" y="6.0" width="2.8" height="3.3"/><rect x="6.3" y="11.1" width="2.8" height="3.6"/><rect x="6.3" y="17.3" width="2.8" height="3.5"/><rect x="6.3" y="23.4" width="2.8" height="3.3"/><rect x="26.9" y="6.0" width="2.9" height="3.3"/><rect x="26.9" y="11.1" width="2.9" height="3.6"/><rect x="26.9" y="17.3" width="2.9" height="3.5"/></g><circle cx="20" cy="14.7" r="4.1" fill="none" stroke="#c4c4c4" stroke-width="2"/><path d="M12 22L16.3 18.3" stroke="#c4c4c4" stroke-width="3" stroke-linecap="round"/><path d="M24.3 21.3L32.4 25.8L29.5 26.8L31.8 29.5L30.3 30.8L28 28.2L26.5 30Z" fill="#c2c2c2"/></svg><div class="sep" style="top:221px"></div><div class="sep" style="top:282px"></div><div class="card" style="left:1734px;top:293px;width:173px;height:84px;border-radius:6px"><div class="a" style="left:0;top:0;width:173px;height:19px;background:#000"></div><div class="a" style="left:0;top:62px;width:173px;height:1.5px;background:#2a2a2a"></div></div><span class="t" style="left:1739px;top:295px;font-size:14.5px;color:#f0f0f0">Cursors</span><div class="a" style="left:1741px;top:316.5px;width:16px;height:16px;border-radius:50%;background:#3a8ad4;color:#fff;font-size:12.5px;font-weight:bold;line-height:16px;text-align:center">A</div><span class="t bt" style="left:1771px;top:316.5px">v: 12.479 V</span><div class="a" style="left:1741px;top:336.0px;width:16px;height:16px;border-radius:50%;background:#3a8ad4;color:#fff;font-size:12.5px;font-weight:bold;line-height:16px;text-align:center">B</div><span class="t bt" style="left:1771px;top:336.0px">v: 11.909 V</span><span class="t bt" style="left:1762px;top:359px">&#916;v: 569.374 mV</span><div class="card" style="left:1734px;top:381px;width:173px;height:60px"><div class="h" style="height:21px"></div></div><span class="t" style="left:1739px;top:384px;font-size:14.5px;color:#e8e8e8">Meas 1</span><div class="a" style="left:1879px;top:385.2px;width:22.5px;height:13px;border-radius:6.5px;background:#f8ec30;border:1.3px solid #2a2a2a;color:#111;font-size:10.5px;line-height:11px;text-align:center">1</div><span class="t bt" style="left:1741px;top:405px">Maximum</span><span class="t bt" style="left:1741px;top:424.5px">&#956;': 12.48 V</span><div class="card" style="left:1734px;top:446px;width:173px;height:60px"><div class="h" style="height:21px"></div></div><span class="t" style="left:1739px;top:449px;font-size:14.5px;color:#e8e8e8">Meas 2</span><div class="a" style="left:1879px;top:450.2px;width:22.5px;height:13px;border-radius:6.5px;background:#f8ec30;border:1.3px solid #2a2a2a;color:#111;font-size:10.5px;line-height:11px;text-align:center">1</div><span class="t bt" style="left:1741px;top:470px">Minimum</span><span class="t bt" style="left:1741px;top:489.5px">&#956;': 11.91 V</span><div class="card" style="left:1734px;top:511px;width:173px;height:60px"><div class="h" style="height:21px"></div></div><span class="t" style="left:1739px;top:514px;font-size:14.5px;color:#e8e8e8">Meas 3</span><div class="a" style="left:1879px;top:515.2px;width:22.5px;height:13px;border-radius:6.5px;background:#22c8d0;border:1.3px solid #2a2a2a;color:#111;font-size:10.5px;line-height:11px;text-align:center">2</div><span class="t bt" style="left:1741px;top:535px">Maximum</span><span class="t bt" style="left:1741px;top:554.5px">&#956;': 110.8 A</span><div class="card" style="left:1734px;top:576px;width:173px;height:60px"><div class="h" style="height:21px"></div></div><span class="t" style="left:1739px;top:579px;font-size:14.5px;color:#e8e8e8">Meas 4</span><div class="a" style="left:1879px;top:580.2px;width:22.5px;height:13px;border-radius:6.5px;background:#22c8d0;border:1.3px solid #2a2a2a;color:#111;font-size:10.5px;line-height:11px;text-align:center">2</div><span class="t bt" style="left:1741px;top:600px">Minimum</span><span class="t bt" style="left:1741px;top:619.5px">&#956;': 49.64 A</span><div class="card" style="left:1734px;top:641px;width:173px;height:60px"><div class="h" style="height:21px"></div></div><span class="t" style="left:1739px;top:644px;font-size:14.5px;color:#e8e8e8">Meas 5</span><div class="a" style="left:1879px;top:645.2px;width:22.5px;height:13px;border-radius:6.5px;background:#e8425e;border:1.3px solid #2a2a2a;color:#fff;font-size:10.5px;line-height:11px;text-align:center">3</div><span class="t bt" style="left:1741px;top:665px">Maximum</span><span class="t bt" style="left:1741px;top:684.5px">&#956;': 5.031 V</span><svg class="a" style="left:1718px;top:494px" width="12" height="30"><circle cx="5" cy="7" r="2" fill="#9a9a9a"/><circle cx="5" cy="15.5" r="2" fill="#9a9a9a"/><circle cx="5" cy="24" r="2" fill="#9a9a9a"/></svg><svg class="a" style="left:1790px;top:850px" width="30" height="36"><path d="M6.5 5V26.5L12 24L15.5 30.5L18 29.5L16 23.5L21.5 20.5Z" fill="#1e1e1e" stroke="#eee" stroke-width="1.1" stroke-linejoin="round"/></svg>
<div id="bb" class="a"></div>
<div class="card" style="left:12px;top:988.5px;width:108px;height:80px;border-radius:5px"><div class="h" style="height:21px;background:#fef23a;border-bottom:2px solid #969696"></div></div><span class="t" style="left:17px;top:990px;font-size:15px;color:#111">Ch 1</span><span class="t bt" style="left:19px;top:1013px">500 mV/div</span><span class="t bt" style="left:19px;top:1032px">1 M&#937;</span><span class="t bt" style="left:19px;top:1051px">20 MHz</span><span class="t" style="left:85px;top:1050px;font-size:10px;color:#000">B<sub style="font-size:9px;vertical-align:-3px">w</sub></span><div class="card" style="left:125px;top:988.5px;width:108px;height:80px;border-radius:5px"><div class="h" style="height:21px;background:#1f4646;border-bottom:2px solid #969696"></div></div><span class="t" style="left:130px;top:990px;font-size:15px;color:#2ccad2">Ch 2</span><span class="t bt" style="left:132px;top:1013px">20 A/div</span><span class="t bt" style="left:132px;top:1032px">50 &#937;</span><span class="t bt" style="left:132px;top:1051px">20 MHz</span><span class="t" style="left:198px;top:1050px;font-size:10px;color:#000">B<sub style="font-size:9px;vertical-align:-3px">w</sub></span><div class="card" style="left:238px;top:988.5px;width:108px;height:80px;border-radius:5px"><div class="h" style="height:21px;background:#4a2428;border-bottom:2px solid #969696"></div></div><span class="t" style="left:243px;top:990px;font-size:15px;color:#f0f0f0">Ch 3</span><span class="t bt" style="left:245px;top:1013px">5 V/div</span><span class="t bt" style="left:245px;top:1032px">1 M&#937;</span><span class="t bt" style="left:245px;top:1051px">20 MHz</span><span class="t" style="left:311px;top:1050px;font-size:10px;color:#000">B<sub style="font-size:9px;vertical-align:-3px">w</sub></span><div class="nb" style="left:1058px;top:988px"><i style="background:#7cd21e"></i><span class="t" style="left:0;width:38px;top:33px;font-size:19.5px;text-align:center">4</span></div><div class="vsep" style="left:1108px"></div><div class="nb" style="left:1119px;top:988px"><i style="background:#f08a1e"></i><span class="a" style="left:-4px;right:-4px;top:20px;font-size:14.5px;line-height:16px;text-align:center">Add<br>New<br>Math</span></div><div class="nb" style="left:1164px;top:988px"><i style="background:#b4b8c8"></i><span class="a" style="left:-4px;right:-4px;top:20px;font-size:14.5px;line-height:16px;text-align:center">Add<br>New<br>Ref</span></div><div class="nb" style="left:1209px;top:988px"><i style="background:#c050f0"></i><span class="a" style="left:-4px;right:-4px;top:20px;font-size:14.5px;line-height:16px;text-align:center">Add<br>New<br>Bus</span></div><div class="vsep" style="left:1259px"></div><div class="card" style="left:1271px;top:989.5px;width:198px;height:78.5px"><div class="h" style="height:21px"></div></div><span class="t" style="left:1277px;top:990.5px;font-size:15px;color:#eaeaea">Horizontal</span><span class="t bt" style="left:1277px;top:1013px">2 ms/div</span><span class="t bt" style="left:1383px;top:1013px">20 ms</span><span class="t bt" style="left:1277px;top:1032px">SR: 12.5 MS/s</span><span class="t bt" style="left:1383px;top:1032px">80 ns/pt</span><span class="t bt" style="left:1277px;top:1051px">RL: 250 kpts</span><span class="t bt" style="left:1397px;top:1051px">85%</span><svg class="a" style="left:1382px;top:1051px" width="12" height="16"><path d="M1 1H10V10H7L5.5 13L4 10H1Z" fill="#111" stroke="#f39325" stroke-width="1.5"/><path d="M3.5 3.5H7.5M5.5 3.5V8" stroke="#fff" stroke-width="1.3"/></svg><div class="card" style="left:1476px;top:989.5px;width:158px;height:78.5px"><div class="h" style="height:21px"></div></div><span class="t" style="left:1482px;top:990.5px;font-size:15px;color:#eaeaea">Trigger</span><div class="a" style="left:1482px;top:1013px;width:30px;height:16.5px;border-radius:5px;background:#fbf03a;border:1px solid #2a2a2a;font-size:14px;color:#111;line-height:14.5px;text-align:center">1</div><svg class="a" style="left:1520px;top:1013px" width="20" height="16"><path d="M2 12.5H6L15 2.5H17.5" fill="none" stroke="#4c4c8c" stroke-width="1.1"/></svg><span class="t bt" style="left:1549px;top:1013px">12.18 V</span><div class="card" style="left:1641px;top:989.5px;width:148px;height:78.5px"><div class="h" style="height:21px"></div></div><span class="t" style="left:1647px;top:990.5px;font-size:15px;color:#eaeaea">Acquisition</span><span class="t bt" style="left:1647px;top:1013px">Auto,</span><span class="t bt" style="left:1729px;top:1013px">Analyze</span><span class="t bt" style="left:1647px;top:1033px">Sample: 12 bits</span><span class="t bt" style="left:1647px;top:1052px">22 Acqs</span><div class="vsep" style="left:1802px"></div><div class="a" style="left:1813px;top:988px;width:90px;height:36px;border-radius:6px;background:#ff2228;border:1px solid #798181;color:#fff;font-weight:bold;font-size:13.5px;line-height:31px;text-align:center">Stopped</div><div class="a" style="left:1813px;top:1032px;width:90px;height:36px;border-radius:5px;background:#c9c9c9;color:#111;font-size:14.5px;line-height:17px;text-align:center;padding-top:1px">20 Oct 2023<br>13:06:18</div>
</body></html>
